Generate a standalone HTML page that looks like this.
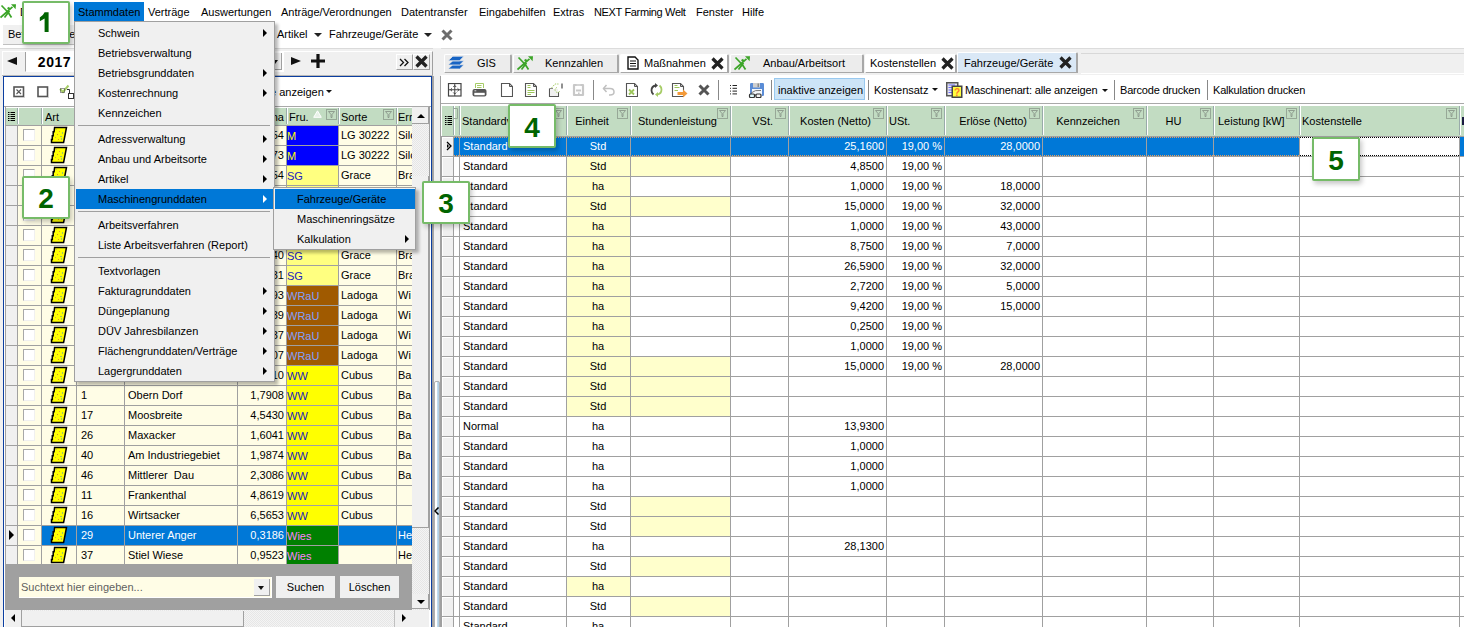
<!DOCTYPE html>
<html><head><meta charset="utf-8"><style>
html,body{margin:0;padding:0;width:1464px;height:627px;overflow:hidden;position:relative;font-family:"Liberation Sans", sans-serif;font-size:11px;color:#000}
</style></head><body>
<div style="position:absolute;left:0px;top:0px;width:1464px;height:627px;background:#f0f0f0"></div>
<div style="position:absolute;left:0px;top:0px;width:1464px;height:48px;background:#fff"></div>
<div style="position:absolute;left:0px;top:48px;width:1464px;height:1px;background:#dadada"></div>
<div style="position:absolute;left:148px;top:2px;line-height:20px;white-space:nowrap;">Verträge</div>
<div style="position:absolute;left:201px;top:2px;line-height:20px;white-space:nowrap;">Auswertungen</div>
<div style="position:absolute;left:281px;top:2px;line-height:20px;white-space:nowrap;">Anträge/Verordnungen</div>
<div style="position:absolute;left:401px;top:2px;line-height:20px;white-space:nowrap;">Datentransfer</div>
<div style="position:absolute;left:479px;top:2px;line-height:20px;white-space:nowrap;">Eingabehilfen</div>
<div style="position:absolute;left:553px;top:2px;line-height:20px;white-space:nowrap;">Extras</div>
<div style="position:absolute;left:594px;top:2px;line-height:20px;white-space:nowrap;letter-spacing:-0.35px">NEXT Farming Welt</div>
<div style="position:absolute;left:696px;top:2px;line-height:20px;white-space:nowrap;">Fenster</div>
<div style="position:absolute;left:742px;top:2px;line-height:20px;white-space:nowrap;">Hilfe</div>
<div style="position:absolute;left:74px;top:2px;width:70px;height:19px;background:#0078d7"></div>
<div style="position:absolute;left:78px;top:2px;line-height:20px;white-space:nowrap;">Stammdaten</div>
<svg style="position:absolute;left:0px;top:4px" width="17" height="15" viewBox="0 0 17 15" fill="none"><path d="M1.5 1.5 L6.8 7 M8.6 9 L11.5 13.5 M0.5 13.5 L12.5 2.8 M4.5 13.5 L9.5 7 M7.5 4.8 L9.5 3.5" stroke="#3ca528" stroke-width="1.7" fill="none"/><path d="M11 0.3 L16 0.3 L15.6 5.3 Z" fill="#3ca528"/></svg>
<div style="position:absolute;left:20px;top:2px;line-height:20px;white-space:nowrap;">D</div>
<div style="position:absolute;left:3px;top:25px;width:72px;height:19px;background:#f0f0f0;border-bottom:1px solid #c0c0c0"></div>
<div style="position:absolute;left:8px;top:24px;line-height:20px;white-space:nowrap;">Betriebsstätte</div>
<div style="position:absolute;left:277px;top:24px;line-height:20px;white-space:nowrap;">Artikel</div>
<div style="position:absolute;left:329px;top:24px;line-height:20px;white-space:nowrap;">Fahrzeuge/Geräte</div>
<div style="position:absolute;left:314px;top:33px;width:0;height:0;border-left:4.0px solid transparent;border-right:4.0px solid transparent;border-top:4px solid #222"></div>
<div style="position:absolute;left:424px;top:33px;width:0;height:0;border-left:4.0px solid transparent;border-right:4.0px solid transparent;border-top:4px solid #222"></div>
<svg style="position:absolute;left:441px;top:29px" width="12" height="12" viewBox="0 0 12 12" fill="none"><path d="M1.5 1.5 L10.5 10.5 M10.5 1.5 L1.5 10.5" stroke="#6d6d6d" stroke-width="3"/></svg>
<div style="position:absolute;left:7px;top:57px;width:0;height:0;border-top:4.5px solid transparent;border-bottom:4.5px solid transparent;border-right:10px solid #111"></div>
<div style="position:absolute;left:25px;top:51px;width:259px;height:21px;background:#fff;border-top:1px solid #a0a0a0;border-left:1px solid #a0a0a0;border-right:1px solid #fff;border-bottom:1px solid #fff;box-sizing:border-box"></div>
<div style="position:absolute;left:274px;top:53px;width:8px;height:17px;background:#f0f0f0;border-right:1px solid #a0a0a0;border-bottom:1px solid #a0a0a0;box-sizing:border-box"></div>
<div style="position:absolute;left:272px;top:60px;width:0;height:0;border-left:3.5px solid transparent;border-right:3.5px solid transparent;border-top:4px solid #111"></div>
<div style="position:absolute;right:1393px;top:51px;line-height:22px;white-space:nowrap;font-weight:bold;font-size:14px;letter-spacing:0.5px">2017</div>
<div style="position:absolute;left:291px;top:57px;width:0;height:0;border-top:4.5px solid transparent;border-bottom:4.5px solid transparent;border-left:10px solid #111"></div>
<svg style="position:absolute;left:311px;top:54px" width="14" height="14" viewBox="0 0 14 14" fill="none"><path d="M7 0 V14 M0 7 H14" stroke="#111" stroke-width="3.2"/></svg>
<div style="position:absolute;left:2px;top:51px;width:431px;height:25px;border-top:1px solid #fff;border-left:1px solid #fff;border-right:1px solid #a0a0a0;box-sizing:border-box"></div>
<div style="position:absolute;left:396px;top:54px;width:17px;height:16px;background:#f0f0f0;border-top:1px solid #fff;border-left:1px solid #fff;border-right:1px solid #a0a0a0;border-bottom:1px solid #a0a0a0;box-sizing:border-box"></div>
<svg style="position:absolute;left:399px;top:58px" width="11" height="9" viewBox="0 0 11 9" fill="none"><path d="M1 1 L4.5 4.5 L1 8 M5.5 1 L9 4.5 L5.5 8" stroke="#111" stroke-width="1.3" fill="none"/></svg>
<div style="position:absolute;left:413px;top:54px;width:17px;height:16px;background:#f0f0f0;border-top:1px solid #fff;border-left:1px solid #fff;border-right:1px solid #a0a0a0;border-bottom:1px solid #a0a0a0;box-sizing:border-box"></div>
<svg style="position:absolute;left:415px;top:55px" width="13" height="13" viewBox="0 0 13 13" fill="none"><path d="M1.5 1.5 L11.5 11.5 M11.5 1.5 L1.5 11.5" stroke="#222" stroke-width="3.3"/></svg>
<div style="position:absolute;left:2px;top:75px;width:431px;height:1px;background:#b8b8b8"></div>
<div style="position:absolute;left:3px;top:76px;width:429px;height:551px;background:#fff;border-left:1px solid #0b3ea0;border-top:1px solid #0b3ea0;border-right:1px solid #0b3ea0;box-sizing:border-box"></div>
<div style="position:absolute;left:432px;top:76px;width:1px;height:551px;background:#a0a0a0"></div>
<svg style="position:absolute;left:13px;top:86px" width="12" height="12" viewBox="0 0 12 12" fill="none"><rect x="1" y="1" width="9.5" height="9.5" fill="#fff" stroke="#555" stroke-width="1.6"/><path d="M3.5 3.5 L8 8 M8 3.5 L3.5 8" stroke="#555" stroke-width="1.1"/><path d="M11.5 2 V11.5 H2" fill="none" stroke="#ccc" stroke-width="1"/></svg>
<svg style="position:absolute;left:37px;top:86px" width="12" height="12" viewBox="0 0 12 12" fill="none"><rect x="1" y="1" width="9.5" height="9.5" fill="#fff" stroke="#555" stroke-width="1.6"/><path d="M11.5 2 V11.5 H2" fill="none" stroke="#ccc" stroke-width="1"/></svg>
<svg style="position:absolute;left:59px;top:84px" width="16" height="15" viewBox="0 0 16 15" fill="none"><path d="M1 5 L4 8 L9.5 1.5" stroke="#a6cc66" stroke-width="2" fill="none"/><rect x="1.5" y="4.5" width="4" height="4" fill="none" stroke="#333" stroke-dasharray="1 1"/><path d="M8 5.5 H10.5 V9" stroke="#333" fill="none"/><rect x="9.5" y="9.5" width="5" height="5" fill="#fff" stroke="#333"/></svg>
<div style="position:absolute;left:270px;top:82px;line-height:20px;white-space:nowrap;">e anzeigen</div>
<div style="position:absolute;left:326px;top:90px;width:0;height:0;border-left:3.0px solid transparent;border-right:3.0px solid transparent;border-top:3px solid #111"></div>
<div style="position:absolute;left:4px;top:106px;width:427px;height:1px;background:#a9a9a9"></div>
<div style="position:absolute;left:5px;top:107px;width:425px;height:503px;background:#fff"></div>
<div style="position:absolute;left:5px;top:106px;width:1px;height:504px;background:#a0a0a0"></div>
<div style="position:absolute;left:429px;top:106px;width:1px;height:504px;background:#a0a0a0"></div>
<div style="position:absolute;left:6px;top:107px;width:406px;height:18px;background:#fff"></div>
<div style="position:absolute;left:6px;top:108px;width:406px;height:17px;background:#c2dcc2"></div>
<div style="position:absolute;left:17px;top:108px;width:1px;height:16px;background:#9aa"></div>
<div style="position:absolute;left:18px;top:108px;width:1px;height:16px;background:#fff"></div>
<div style="position:absolute;left:41px;top:108px;width:1px;height:16px;background:#9aa"></div>
<div style="position:absolute;left:42px;top:108px;width:1px;height:16px;background:#fff"></div>
<div style="position:absolute;left:76px;top:108px;width:1px;height:16px;background:#9aa"></div>
<div style="position:absolute;left:77px;top:108px;width:1px;height:16px;background:#fff"></div>
<div style="position:absolute;left:124px;top:108px;width:1px;height:16px;background:#9aa"></div>
<div style="position:absolute;left:125px;top:108px;width:1px;height:16px;background:#fff"></div>
<div style="position:absolute;left:237px;top:108px;width:1px;height:16px;background:#9aa"></div>
<div style="position:absolute;left:238px;top:108px;width:1px;height:16px;background:#fff"></div>
<div style="position:absolute;left:286px;top:108px;width:1px;height:16px;background:#9aa"></div>
<div style="position:absolute;left:287px;top:108px;width:1px;height:16px;background:#fff"></div>
<div style="position:absolute;left:338px;top:108px;width:1px;height:16px;background:#9aa"></div>
<div style="position:absolute;left:339px;top:108px;width:1px;height:16px;background:#fff"></div>
<div style="position:absolute;left:396px;top:108px;width:1px;height:16px;background:#9aa"></div>
<div style="position:absolute;left:397px;top:108px;width:1px;height:16px;background:#fff"></div>
<div style="position:absolute;left:5px;top:125px;width:407px;height:1px;background:#a0a0a0"></div>
<svg style="position:absolute;left:8px;top:112px" width="8" height="10" viewBox="0 0 8 10" fill="none"><path d="M0 0.5 H1.5 M2.5 0.5 H7 M0 2.5 H1.5 M2.5 2.5 H7 M0 4.5 H1.5 M2.5 4.5 H7 M0 6.5 H1.5 M2.5 6.5 H7 M0 8.5 H1.5 M2.5 8.5 H7" stroke="#000" stroke-width="1"/></svg>
<div style="position:absolute;left:45px;top:107px;line-height:20px;white-space:nowrap;">Art</div>
<div style="position:absolute;right:1180px;top:107px;line-height:20px;white-space:nowrap;">ha</div>
<div style="position:absolute;left:289px;top:107px;line-height:20px;white-space:nowrap;">Fru.</div>
<svg style="position:absolute;left:313px;top:110px" width="9" height="8" viewBox="0 0 9 8" fill="none"><path d="M4.5 0.8 L8.3 7.3 H0.7 Z" fill="#e8f2e8" stroke="#fff" stroke-width="1"/></svg>
<svg style="position:absolute;left:326px;top:109px" width="11" height="11" viewBox="0 0 11 11" fill="none"><rect x="0.5" y="0.5" width="10" height="10" fill="none" stroke="#97a897"/><path d="M2.5 2.5 H8.5 L6 5.5 V8.5 H5 V5.5 Z" fill="none" stroke="#8a968a" stroke-width="0.9"/></svg>
<div style="position:absolute;left:341px;top:107px;line-height:20px;white-space:nowrap;">Sorte</div>
<svg style="position:absolute;left:383px;top:109px" width="11" height="11" viewBox="0 0 11 11" fill="none"><rect x="0.5" y="0.5" width="10" height="10" fill="none" stroke="#97a897"/><path d="M2.5 2.5 H8.5 L6 5.5 V8.5 H5 V5.5 Z" fill="none" stroke="#8a968a" stroke-width="0.9"/></svg>
<div style="position:absolute;left:398px;top:107px;line-height:20px;white-space:nowrap;">Err</div>
<div style="position:absolute;left:6px;top:126px;width:406px;height:19px;background:#fffde6"></div>
<div style="position:absolute;left:6px;top:126px;width:11px;height:19px;background:#f0f0f0"></div>
<div style="position:absolute;left:287px;top:126px;width:51px;height:19px;background:#0000ff"></div>
<div style="position:absolute;left:5px;top:145px;width:407px;height:1px;background:#a0a0a0"></div>
<div style="position:absolute;left:17px;top:126px;width:1px;height:19px;background:#a0a0a0"></div>
<div style="position:absolute;left:41px;top:126px;width:1px;height:19px;background:#a0a0a0"></div>
<div style="position:absolute;left:76px;top:126px;width:1px;height:19px;background:#a0a0a0"></div>
<div style="position:absolute;left:124px;top:126px;width:1px;height:19px;background:#a0a0a0"></div>
<div style="position:absolute;left:237px;top:126px;width:1px;height:19px;background:#a0a0a0"></div>
<div style="position:absolute;left:286px;top:126px;width:1px;height:19px;background:#a0a0a0"></div>
<div style="position:absolute;left:338px;top:126px;width:1px;height:19px;background:#a0a0a0"></div>
<div style="position:absolute;left:396px;top:126px;width:1px;height:19px;background:#a0a0a0"></div>
<div style="position:absolute;left:23px;top:129px;width:12px;height:12px;background:#fff;border-left:1px solid #a8a8a8;border-top:1px solid #a8a8a8;border-right:1px solid #f0f0f0;border-bottom:1px solid #f0f0f0;box-sizing:border-box"></div>
<svg style="position:absolute;left:50px;top:126px" width="18" height="18" viewBox="0 0 18 18" fill="none"><path d="M4.6 1.5 H16.5 L13.6 16.5 H1.5 V13.5 H2.3 V9.8 H3.2 V5.8 H4.1 Z" fill="#ffff00" stroke="#000" stroke-width="1.5" stroke-linejoin="miter"/><rect x="6" y="3" width="1" height="1" fill="#c8c060"/><rect x="9" y="5" width="1" height="1" fill="#e0a040"/><rect x="12" y="6" width="1" height="2" fill="#98c070"/><rect x="7" y="8" width="1" height="1" fill="#d09030"/><rect x="10" y="10" width="2" height="1" fill="#98c070"/><rect x="5" y="11" width="1" height="1" fill="#c8b050"/><rect x="8" y="13" width="1" height="1" fill="#e09030"/><rect x="11" y="12" width="1" height="2" fill="#a0c080"/></svg>
<div style="position:absolute;right:1180px;top:125px;line-height:20px;white-space:nowrap;color:#000">54</div>
<div style="position:absolute;left:287px;top:126px;line-height:20px;white-space:nowrap;color:#ffff00">M</div>
<div style="position:absolute;left:341px;top:125px;line-height:20px;white-space:nowrap;color:#000">LG 30222</div>
<div style="position:absolute;left:398px;top:125px;line-height:20px;white-space:nowrap;color:#000">Silo</div>
<div style="position:absolute;left:6px;top:146px;width:406px;height:19px;background:#fffde6"></div>
<div style="position:absolute;left:6px;top:146px;width:11px;height:19px;background:#f0f0f0"></div>
<div style="position:absolute;left:287px;top:146px;width:51px;height:19px;background:#0000ff"></div>
<div style="position:absolute;left:5px;top:165px;width:407px;height:1px;background:#a0a0a0"></div>
<div style="position:absolute;left:17px;top:146px;width:1px;height:19px;background:#a0a0a0"></div>
<div style="position:absolute;left:41px;top:146px;width:1px;height:19px;background:#a0a0a0"></div>
<div style="position:absolute;left:76px;top:146px;width:1px;height:19px;background:#a0a0a0"></div>
<div style="position:absolute;left:124px;top:146px;width:1px;height:19px;background:#a0a0a0"></div>
<div style="position:absolute;left:237px;top:146px;width:1px;height:19px;background:#a0a0a0"></div>
<div style="position:absolute;left:286px;top:146px;width:1px;height:19px;background:#a0a0a0"></div>
<div style="position:absolute;left:338px;top:146px;width:1px;height:19px;background:#a0a0a0"></div>
<div style="position:absolute;left:396px;top:146px;width:1px;height:19px;background:#a0a0a0"></div>
<div style="position:absolute;left:23px;top:149px;width:12px;height:12px;background:#fff;border-left:1px solid #a8a8a8;border-top:1px solid #a8a8a8;border-right:1px solid #f0f0f0;border-bottom:1px solid #f0f0f0;box-sizing:border-box"></div>
<svg style="position:absolute;left:50px;top:146px" width="18" height="18" viewBox="0 0 18 18" fill="none"><path d="M4.6 1.5 H16.5 L13.6 16.5 H1.5 V13.5 H2.3 V9.8 H3.2 V5.8 H4.1 Z" fill="#ffff00" stroke="#000" stroke-width="1.5" stroke-linejoin="miter"/><rect x="6" y="3" width="1" height="1" fill="#c8c060"/><rect x="9" y="5" width="1" height="1" fill="#e0a040"/><rect x="12" y="6" width="1" height="2" fill="#98c070"/><rect x="7" y="8" width="1" height="1" fill="#d09030"/><rect x="10" y="10" width="2" height="1" fill="#98c070"/><rect x="5" y="11" width="1" height="1" fill="#c8b050"/><rect x="8" y="13" width="1" height="1" fill="#e09030"/><rect x="11" y="12" width="1" height="2" fill="#a0c080"/></svg>
<div style="position:absolute;right:1180px;top:145px;line-height:20px;white-space:nowrap;color:#000">73</div>
<div style="position:absolute;left:287px;top:146px;line-height:20px;white-space:nowrap;color:#ffff00">M</div>
<div style="position:absolute;left:341px;top:145px;line-height:20px;white-space:nowrap;color:#000">LG 30222</div>
<div style="position:absolute;left:398px;top:145px;line-height:20px;white-space:nowrap;color:#000">Silo</div>
<div style="position:absolute;left:6px;top:166px;width:406px;height:19px;background:#fffde6"></div>
<div style="position:absolute;left:6px;top:166px;width:11px;height:19px;background:#f0f0f0"></div>
<div style="position:absolute;left:287px;top:166px;width:51px;height:19px;background:#ffff80"></div>
<div style="position:absolute;left:5px;top:185px;width:407px;height:1px;background:#a0a0a0"></div>
<div style="position:absolute;left:17px;top:166px;width:1px;height:19px;background:#a0a0a0"></div>
<div style="position:absolute;left:41px;top:166px;width:1px;height:19px;background:#a0a0a0"></div>
<div style="position:absolute;left:76px;top:166px;width:1px;height:19px;background:#a0a0a0"></div>
<div style="position:absolute;left:124px;top:166px;width:1px;height:19px;background:#a0a0a0"></div>
<div style="position:absolute;left:237px;top:166px;width:1px;height:19px;background:#a0a0a0"></div>
<div style="position:absolute;left:286px;top:166px;width:1px;height:19px;background:#a0a0a0"></div>
<div style="position:absolute;left:338px;top:166px;width:1px;height:19px;background:#a0a0a0"></div>
<div style="position:absolute;left:396px;top:166px;width:1px;height:19px;background:#a0a0a0"></div>
<div style="position:absolute;left:23px;top:169px;width:12px;height:12px;background:#fff;border-left:1px solid #a8a8a8;border-top:1px solid #a8a8a8;border-right:1px solid #f0f0f0;border-bottom:1px solid #f0f0f0;box-sizing:border-box"></div>
<svg style="position:absolute;left:50px;top:166px" width="18" height="18" viewBox="0 0 18 18" fill="none"><path d="M4.6 1.5 H16.5 L13.6 16.5 H1.5 V13.5 H2.3 V9.8 H3.2 V5.8 H4.1 Z" fill="#ffff00" stroke="#000" stroke-width="1.5" stroke-linejoin="miter"/><rect x="6" y="3" width="1" height="1" fill="#c8c060"/><rect x="9" y="5" width="1" height="1" fill="#e0a040"/><rect x="12" y="6" width="1" height="2" fill="#98c070"/><rect x="7" y="8" width="1" height="1" fill="#d09030"/><rect x="10" y="10" width="2" height="1" fill="#98c070"/><rect x="5" y="11" width="1" height="1" fill="#c8b050"/><rect x="8" y="13" width="1" height="1" fill="#e09030"/><rect x="11" y="12" width="1" height="2" fill="#a0c080"/></svg>
<div style="position:absolute;right:1180px;top:165px;line-height:20px;white-space:nowrap;color:#000">54</div>
<div style="position:absolute;left:287px;top:166px;line-height:20px;white-space:nowrap;color:#2020c0">SG</div>
<div style="position:absolute;left:341px;top:165px;line-height:20px;white-space:nowrap;color:#000">Grace</div>
<div style="position:absolute;left:398px;top:165px;line-height:20px;white-space:nowrap;color:#000">Bra</div>
<div style="position:absolute;left:6px;top:186px;width:406px;height:19px;background:#fffde6"></div>
<div style="position:absolute;left:6px;top:186px;width:11px;height:19px;background:#f0f0f0"></div>
<div style="position:absolute;left:287px;top:186px;width:51px;height:19px;background:#ffff80"></div>
<div style="position:absolute;left:5px;top:205px;width:407px;height:1px;background:#a0a0a0"></div>
<div style="position:absolute;left:17px;top:186px;width:1px;height:19px;background:#a0a0a0"></div>
<div style="position:absolute;left:41px;top:186px;width:1px;height:19px;background:#a0a0a0"></div>
<div style="position:absolute;left:76px;top:186px;width:1px;height:19px;background:#a0a0a0"></div>
<div style="position:absolute;left:124px;top:186px;width:1px;height:19px;background:#a0a0a0"></div>
<div style="position:absolute;left:237px;top:186px;width:1px;height:19px;background:#a0a0a0"></div>
<div style="position:absolute;left:286px;top:186px;width:1px;height:19px;background:#a0a0a0"></div>
<div style="position:absolute;left:338px;top:186px;width:1px;height:19px;background:#a0a0a0"></div>
<div style="position:absolute;left:396px;top:186px;width:1px;height:19px;background:#a0a0a0"></div>
<div style="position:absolute;left:23px;top:189px;width:12px;height:12px;background:#fff;border-left:1px solid #a8a8a8;border-top:1px solid #a8a8a8;border-right:1px solid #f0f0f0;border-bottom:1px solid #f0f0f0;box-sizing:border-box"></div>
<svg style="position:absolute;left:50px;top:186px" width="18" height="18" viewBox="0 0 18 18" fill="none"><path d="M4.6 1.5 H16.5 L13.6 16.5 H1.5 V13.5 H2.3 V9.8 H3.2 V5.8 H4.1 Z" fill="#ffff00" stroke="#000" stroke-width="1.5" stroke-linejoin="miter"/><rect x="6" y="3" width="1" height="1" fill="#c8c060"/><rect x="9" y="5" width="1" height="1" fill="#e0a040"/><rect x="12" y="6" width="1" height="2" fill="#98c070"/><rect x="7" y="8" width="1" height="1" fill="#d09030"/><rect x="10" y="10" width="2" height="1" fill="#98c070"/><rect x="5" y="11" width="1" height="1" fill="#c8b050"/><rect x="8" y="13" width="1" height="1" fill="#e09030"/><rect x="11" y="12" width="1" height="2" fill="#a0c080"/></svg>
<div style="position:absolute;left:6px;top:206px;width:406px;height:19px;background:#fffde6"></div>
<div style="position:absolute;left:6px;top:206px;width:11px;height:19px;background:#f0f0f0"></div>
<div style="position:absolute;left:287px;top:206px;width:51px;height:19px;background:#ffff80"></div>
<div style="position:absolute;left:5px;top:225px;width:407px;height:1px;background:#a0a0a0"></div>
<div style="position:absolute;left:17px;top:206px;width:1px;height:19px;background:#a0a0a0"></div>
<div style="position:absolute;left:41px;top:206px;width:1px;height:19px;background:#a0a0a0"></div>
<div style="position:absolute;left:76px;top:206px;width:1px;height:19px;background:#a0a0a0"></div>
<div style="position:absolute;left:124px;top:206px;width:1px;height:19px;background:#a0a0a0"></div>
<div style="position:absolute;left:237px;top:206px;width:1px;height:19px;background:#a0a0a0"></div>
<div style="position:absolute;left:286px;top:206px;width:1px;height:19px;background:#a0a0a0"></div>
<div style="position:absolute;left:338px;top:206px;width:1px;height:19px;background:#a0a0a0"></div>
<div style="position:absolute;left:396px;top:206px;width:1px;height:19px;background:#a0a0a0"></div>
<div style="position:absolute;left:23px;top:209px;width:12px;height:12px;background:#fff;border-left:1px solid #a8a8a8;border-top:1px solid #a8a8a8;border-right:1px solid #f0f0f0;border-bottom:1px solid #f0f0f0;box-sizing:border-box"></div>
<svg style="position:absolute;left:50px;top:206px" width="18" height="18" viewBox="0 0 18 18" fill="none"><path d="M4.6 1.5 H16.5 L13.6 16.5 H1.5 V13.5 H2.3 V9.8 H3.2 V5.8 H4.1 Z" fill="#ffff00" stroke="#000" stroke-width="1.5" stroke-linejoin="miter"/><rect x="6" y="3" width="1" height="1" fill="#c8c060"/><rect x="9" y="5" width="1" height="1" fill="#e0a040"/><rect x="12" y="6" width="1" height="2" fill="#98c070"/><rect x="7" y="8" width="1" height="1" fill="#d09030"/><rect x="10" y="10" width="2" height="1" fill="#98c070"/><rect x="5" y="11" width="1" height="1" fill="#c8b050"/><rect x="8" y="13" width="1" height="1" fill="#e09030"/><rect x="11" y="12" width="1" height="2" fill="#a0c080"/></svg>
<div style="position:absolute;left:6px;top:226px;width:406px;height:19px;background:#fffde6"></div>
<div style="position:absolute;left:6px;top:226px;width:11px;height:19px;background:#f0f0f0"></div>
<div style="position:absolute;left:287px;top:226px;width:51px;height:19px;background:#ffff80"></div>
<div style="position:absolute;left:5px;top:245px;width:407px;height:1px;background:#a0a0a0"></div>
<div style="position:absolute;left:17px;top:226px;width:1px;height:19px;background:#a0a0a0"></div>
<div style="position:absolute;left:41px;top:226px;width:1px;height:19px;background:#a0a0a0"></div>
<div style="position:absolute;left:76px;top:226px;width:1px;height:19px;background:#a0a0a0"></div>
<div style="position:absolute;left:124px;top:226px;width:1px;height:19px;background:#a0a0a0"></div>
<div style="position:absolute;left:237px;top:226px;width:1px;height:19px;background:#a0a0a0"></div>
<div style="position:absolute;left:286px;top:226px;width:1px;height:19px;background:#a0a0a0"></div>
<div style="position:absolute;left:338px;top:226px;width:1px;height:19px;background:#a0a0a0"></div>
<div style="position:absolute;left:396px;top:226px;width:1px;height:19px;background:#a0a0a0"></div>
<div style="position:absolute;left:23px;top:229px;width:12px;height:12px;background:#fff;border-left:1px solid #a8a8a8;border-top:1px solid #a8a8a8;border-right:1px solid #f0f0f0;border-bottom:1px solid #f0f0f0;box-sizing:border-box"></div>
<svg style="position:absolute;left:50px;top:226px" width="18" height="18" viewBox="0 0 18 18" fill="none"><path d="M4.6 1.5 H16.5 L13.6 16.5 H1.5 V13.5 H2.3 V9.8 H3.2 V5.8 H4.1 Z" fill="#ffff00" stroke="#000" stroke-width="1.5" stroke-linejoin="miter"/><rect x="6" y="3" width="1" height="1" fill="#c8c060"/><rect x="9" y="5" width="1" height="1" fill="#e0a040"/><rect x="12" y="6" width="1" height="2" fill="#98c070"/><rect x="7" y="8" width="1" height="1" fill="#d09030"/><rect x="10" y="10" width="2" height="1" fill="#98c070"/><rect x="5" y="11" width="1" height="1" fill="#c8b050"/><rect x="8" y="13" width="1" height="1" fill="#e09030"/><rect x="11" y="12" width="1" height="2" fill="#a0c080"/></svg>
<div style="position:absolute;left:6px;top:246px;width:406px;height:19px;background:#fffde6"></div>
<div style="position:absolute;left:6px;top:246px;width:11px;height:19px;background:#f0f0f0"></div>
<div style="position:absolute;left:287px;top:246px;width:51px;height:19px;background:#ffff80"></div>
<div style="position:absolute;left:5px;top:265px;width:407px;height:1px;background:#a0a0a0"></div>
<div style="position:absolute;left:17px;top:246px;width:1px;height:19px;background:#a0a0a0"></div>
<div style="position:absolute;left:41px;top:246px;width:1px;height:19px;background:#a0a0a0"></div>
<div style="position:absolute;left:76px;top:246px;width:1px;height:19px;background:#a0a0a0"></div>
<div style="position:absolute;left:124px;top:246px;width:1px;height:19px;background:#a0a0a0"></div>
<div style="position:absolute;left:237px;top:246px;width:1px;height:19px;background:#a0a0a0"></div>
<div style="position:absolute;left:286px;top:246px;width:1px;height:19px;background:#a0a0a0"></div>
<div style="position:absolute;left:338px;top:246px;width:1px;height:19px;background:#a0a0a0"></div>
<div style="position:absolute;left:396px;top:246px;width:1px;height:19px;background:#a0a0a0"></div>
<div style="position:absolute;left:23px;top:249px;width:12px;height:12px;background:#fff;border-left:1px solid #a8a8a8;border-top:1px solid #a8a8a8;border-right:1px solid #f0f0f0;border-bottom:1px solid #f0f0f0;box-sizing:border-box"></div>
<svg style="position:absolute;left:50px;top:246px" width="18" height="18" viewBox="0 0 18 18" fill="none"><path d="M4.6 1.5 H16.5 L13.6 16.5 H1.5 V13.5 H2.3 V9.8 H3.2 V5.8 H4.1 Z" fill="#ffff00" stroke="#000" stroke-width="1.5" stroke-linejoin="miter"/><rect x="6" y="3" width="1" height="1" fill="#c8c060"/><rect x="9" y="5" width="1" height="1" fill="#e0a040"/><rect x="12" y="6" width="1" height="2" fill="#98c070"/><rect x="7" y="8" width="1" height="1" fill="#d09030"/><rect x="10" y="10" width="2" height="1" fill="#98c070"/><rect x="5" y="11" width="1" height="1" fill="#c8b050"/><rect x="8" y="13" width="1" height="1" fill="#e09030"/><rect x="11" y="12" width="1" height="2" fill="#a0c080"/></svg>
<div style="position:absolute;right:1180px;top:245px;line-height:20px;white-space:nowrap;color:#000">40</div>
<div style="position:absolute;left:287px;top:246px;line-height:20px;white-space:nowrap;color:#2020c0">SG</div>
<div style="position:absolute;left:341px;top:245px;line-height:20px;white-space:nowrap;color:#000">Grace</div>
<div style="position:absolute;left:398px;top:245px;line-height:20px;white-space:nowrap;color:#000">Bra</div>
<div style="position:absolute;left:6px;top:266px;width:406px;height:19px;background:#fffde6"></div>
<div style="position:absolute;left:6px;top:266px;width:11px;height:19px;background:#f0f0f0"></div>
<div style="position:absolute;left:287px;top:266px;width:51px;height:19px;background:#ffff80"></div>
<div style="position:absolute;left:5px;top:285px;width:407px;height:1px;background:#a0a0a0"></div>
<div style="position:absolute;left:17px;top:266px;width:1px;height:19px;background:#a0a0a0"></div>
<div style="position:absolute;left:41px;top:266px;width:1px;height:19px;background:#a0a0a0"></div>
<div style="position:absolute;left:76px;top:266px;width:1px;height:19px;background:#a0a0a0"></div>
<div style="position:absolute;left:124px;top:266px;width:1px;height:19px;background:#a0a0a0"></div>
<div style="position:absolute;left:237px;top:266px;width:1px;height:19px;background:#a0a0a0"></div>
<div style="position:absolute;left:286px;top:266px;width:1px;height:19px;background:#a0a0a0"></div>
<div style="position:absolute;left:338px;top:266px;width:1px;height:19px;background:#a0a0a0"></div>
<div style="position:absolute;left:396px;top:266px;width:1px;height:19px;background:#a0a0a0"></div>
<div style="position:absolute;left:23px;top:269px;width:12px;height:12px;background:#fff;border-left:1px solid #a8a8a8;border-top:1px solid #a8a8a8;border-right:1px solid #f0f0f0;border-bottom:1px solid #f0f0f0;box-sizing:border-box"></div>
<svg style="position:absolute;left:50px;top:266px" width="18" height="18" viewBox="0 0 18 18" fill="none"><path d="M4.6 1.5 H16.5 L13.6 16.5 H1.5 V13.5 H2.3 V9.8 H3.2 V5.8 H4.1 Z" fill="#ffff00" stroke="#000" stroke-width="1.5" stroke-linejoin="miter"/><rect x="6" y="3" width="1" height="1" fill="#c8c060"/><rect x="9" y="5" width="1" height="1" fill="#e0a040"/><rect x="12" y="6" width="1" height="2" fill="#98c070"/><rect x="7" y="8" width="1" height="1" fill="#d09030"/><rect x="10" y="10" width="2" height="1" fill="#98c070"/><rect x="5" y="11" width="1" height="1" fill="#c8b050"/><rect x="8" y="13" width="1" height="1" fill="#e09030"/><rect x="11" y="12" width="1" height="2" fill="#a0c080"/></svg>
<div style="position:absolute;right:1180px;top:265px;line-height:20px;white-space:nowrap;color:#000">31</div>
<div style="position:absolute;left:287px;top:266px;line-height:20px;white-space:nowrap;color:#2020c0">SG</div>
<div style="position:absolute;left:341px;top:265px;line-height:20px;white-space:nowrap;color:#000">Grace</div>
<div style="position:absolute;left:398px;top:265px;line-height:20px;white-space:nowrap;color:#000">Bra</div>
<div style="position:absolute;left:6px;top:286px;width:406px;height:19px;background:#fffde6"></div>
<div style="position:absolute;left:6px;top:286px;width:11px;height:19px;background:#f0f0f0"></div>
<div style="position:absolute;left:287px;top:286px;width:51px;height:19px;background:#a05a00"></div>
<div style="position:absolute;left:5px;top:305px;width:407px;height:1px;background:#a0a0a0"></div>
<div style="position:absolute;left:17px;top:286px;width:1px;height:19px;background:#a0a0a0"></div>
<div style="position:absolute;left:41px;top:286px;width:1px;height:19px;background:#a0a0a0"></div>
<div style="position:absolute;left:76px;top:286px;width:1px;height:19px;background:#a0a0a0"></div>
<div style="position:absolute;left:124px;top:286px;width:1px;height:19px;background:#a0a0a0"></div>
<div style="position:absolute;left:237px;top:286px;width:1px;height:19px;background:#a0a0a0"></div>
<div style="position:absolute;left:286px;top:286px;width:1px;height:19px;background:#a0a0a0"></div>
<div style="position:absolute;left:338px;top:286px;width:1px;height:19px;background:#a0a0a0"></div>
<div style="position:absolute;left:396px;top:286px;width:1px;height:19px;background:#a0a0a0"></div>
<div style="position:absolute;left:23px;top:289px;width:12px;height:12px;background:#fff;border-left:1px solid #a8a8a8;border-top:1px solid #a8a8a8;border-right:1px solid #f0f0f0;border-bottom:1px solid #f0f0f0;box-sizing:border-box"></div>
<svg style="position:absolute;left:50px;top:286px" width="18" height="18" viewBox="0 0 18 18" fill="none"><path d="M4.6 1.5 H16.5 L13.6 16.5 H1.5 V13.5 H2.3 V9.8 H3.2 V5.8 H4.1 Z" fill="#ffff00" stroke="#000" stroke-width="1.5" stroke-linejoin="miter"/><rect x="6" y="3" width="1" height="1" fill="#c8c060"/><rect x="9" y="5" width="1" height="1" fill="#e0a040"/><rect x="12" y="6" width="1" height="2" fill="#98c070"/><rect x="7" y="8" width="1" height="1" fill="#d09030"/><rect x="10" y="10" width="2" height="1" fill="#98c070"/><rect x="5" y="11" width="1" height="1" fill="#c8b050"/><rect x="8" y="13" width="1" height="1" fill="#e09030"/><rect x="11" y="12" width="1" height="2" fill="#a0c080"/></svg>
<div style="position:absolute;right:1180px;top:285px;line-height:20px;white-space:nowrap;color:#000">93</div>
<div style="position:absolute;left:287px;top:286px;line-height:20px;white-space:nowrap;color:#80a0ff">WRaU</div>
<div style="position:absolute;left:341px;top:285px;line-height:20px;white-space:nowrap;color:#000">Ladoga</div>
<div style="position:absolute;left:398px;top:285px;line-height:20px;white-space:nowrap;color:#000">Wi</div>
<div style="position:absolute;left:6px;top:306px;width:406px;height:19px;background:#fffde6"></div>
<div style="position:absolute;left:6px;top:306px;width:11px;height:19px;background:#f0f0f0"></div>
<div style="position:absolute;left:287px;top:306px;width:51px;height:19px;background:#a05a00"></div>
<div style="position:absolute;left:5px;top:325px;width:407px;height:1px;background:#a0a0a0"></div>
<div style="position:absolute;left:17px;top:306px;width:1px;height:19px;background:#a0a0a0"></div>
<div style="position:absolute;left:41px;top:306px;width:1px;height:19px;background:#a0a0a0"></div>
<div style="position:absolute;left:76px;top:306px;width:1px;height:19px;background:#a0a0a0"></div>
<div style="position:absolute;left:124px;top:306px;width:1px;height:19px;background:#a0a0a0"></div>
<div style="position:absolute;left:237px;top:306px;width:1px;height:19px;background:#a0a0a0"></div>
<div style="position:absolute;left:286px;top:306px;width:1px;height:19px;background:#a0a0a0"></div>
<div style="position:absolute;left:338px;top:306px;width:1px;height:19px;background:#a0a0a0"></div>
<div style="position:absolute;left:396px;top:306px;width:1px;height:19px;background:#a0a0a0"></div>
<div style="position:absolute;left:23px;top:309px;width:12px;height:12px;background:#fff;border-left:1px solid #a8a8a8;border-top:1px solid #a8a8a8;border-right:1px solid #f0f0f0;border-bottom:1px solid #f0f0f0;box-sizing:border-box"></div>
<svg style="position:absolute;left:50px;top:306px" width="18" height="18" viewBox="0 0 18 18" fill="none"><path d="M4.6 1.5 H16.5 L13.6 16.5 H1.5 V13.5 H2.3 V9.8 H3.2 V5.8 H4.1 Z" fill="#ffff00" stroke="#000" stroke-width="1.5" stroke-linejoin="miter"/><rect x="6" y="3" width="1" height="1" fill="#c8c060"/><rect x="9" y="5" width="1" height="1" fill="#e0a040"/><rect x="12" y="6" width="1" height="2" fill="#98c070"/><rect x="7" y="8" width="1" height="1" fill="#d09030"/><rect x="10" y="10" width="2" height="1" fill="#98c070"/><rect x="5" y="11" width="1" height="1" fill="#c8b050"/><rect x="8" y="13" width="1" height="1" fill="#e09030"/><rect x="11" y="12" width="1" height="2" fill="#a0c080"/></svg>
<div style="position:absolute;right:1180px;top:305px;line-height:20px;white-space:nowrap;color:#000">39</div>
<div style="position:absolute;left:287px;top:306px;line-height:20px;white-space:nowrap;color:#80a0ff">WRaU</div>
<div style="position:absolute;left:341px;top:305px;line-height:20px;white-space:nowrap;color:#000">Ladoga</div>
<div style="position:absolute;left:398px;top:305px;line-height:20px;white-space:nowrap;color:#000">Wi</div>
<div style="position:absolute;left:6px;top:326px;width:406px;height:19px;background:#fffde6"></div>
<div style="position:absolute;left:6px;top:326px;width:11px;height:19px;background:#f0f0f0"></div>
<div style="position:absolute;left:287px;top:326px;width:51px;height:19px;background:#a05a00"></div>
<div style="position:absolute;left:5px;top:345px;width:407px;height:1px;background:#a0a0a0"></div>
<div style="position:absolute;left:17px;top:326px;width:1px;height:19px;background:#a0a0a0"></div>
<div style="position:absolute;left:41px;top:326px;width:1px;height:19px;background:#a0a0a0"></div>
<div style="position:absolute;left:76px;top:326px;width:1px;height:19px;background:#a0a0a0"></div>
<div style="position:absolute;left:124px;top:326px;width:1px;height:19px;background:#a0a0a0"></div>
<div style="position:absolute;left:237px;top:326px;width:1px;height:19px;background:#a0a0a0"></div>
<div style="position:absolute;left:286px;top:326px;width:1px;height:19px;background:#a0a0a0"></div>
<div style="position:absolute;left:338px;top:326px;width:1px;height:19px;background:#a0a0a0"></div>
<div style="position:absolute;left:396px;top:326px;width:1px;height:19px;background:#a0a0a0"></div>
<div style="position:absolute;left:23px;top:329px;width:12px;height:12px;background:#fff;border-left:1px solid #a8a8a8;border-top:1px solid #a8a8a8;border-right:1px solid #f0f0f0;border-bottom:1px solid #f0f0f0;box-sizing:border-box"></div>
<svg style="position:absolute;left:50px;top:326px" width="18" height="18" viewBox="0 0 18 18" fill="none"><path d="M4.6 1.5 H16.5 L13.6 16.5 H1.5 V13.5 H2.3 V9.8 H3.2 V5.8 H4.1 Z" fill="#ffff00" stroke="#000" stroke-width="1.5" stroke-linejoin="miter"/><rect x="6" y="3" width="1" height="1" fill="#c8c060"/><rect x="9" y="5" width="1" height="1" fill="#e0a040"/><rect x="12" y="6" width="1" height="2" fill="#98c070"/><rect x="7" y="8" width="1" height="1" fill="#d09030"/><rect x="10" y="10" width="2" height="1" fill="#98c070"/><rect x="5" y="11" width="1" height="1" fill="#c8b050"/><rect x="8" y="13" width="1" height="1" fill="#e09030"/><rect x="11" y="12" width="1" height="2" fill="#a0c080"/></svg>
<div style="position:absolute;right:1180px;top:325px;line-height:20px;white-space:nowrap;color:#000">37</div>
<div style="position:absolute;left:287px;top:326px;line-height:20px;white-space:nowrap;color:#80a0ff">WRaU</div>
<div style="position:absolute;left:341px;top:325px;line-height:20px;white-space:nowrap;color:#000">Ladoga</div>
<div style="position:absolute;left:398px;top:325px;line-height:20px;white-space:nowrap;color:#000">Wi</div>
<div style="position:absolute;left:6px;top:346px;width:406px;height:19px;background:#fffde6"></div>
<div style="position:absolute;left:6px;top:346px;width:11px;height:19px;background:#f0f0f0"></div>
<div style="position:absolute;left:287px;top:346px;width:51px;height:19px;background:#a05a00"></div>
<div style="position:absolute;left:5px;top:365px;width:407px;height:1px;background:#a0a0a0"></div>
<div style="position:absolute;left:17px;top:346px;width:1px;height:19px;background:#a0a0a0"></div>
<div style="position:absolute;left:41px;top:346px;width:1px;height:19px;background:#a0a0a0"></div>
<div style="position:absolute;left:76px;top:346px;width:1px;height:19px;background:#a0a0a0"></div>
<div style="position:absolute;left:124px;top:346px;width:1px;height:19px;background:#a0a0a0"></div>
<div style="position:absolute;left:237px;top:346px;width:1px;height:19px;background:#a0a0a0"></div>
<div style="position:absolute;left:286px;top:346px;width:1px;height:19px;background:#a0a0a0"></div>
<div style="position:absolute;left:338px;top:346px;width:1px;height:19px;background:#a0a0a0"></div>
<div style="position:absolute;left:396px;top:346px;width:1px;height:19px;background:#a0a0a0"></div>
<div style="position:absolute;left:23px;top:349px;width:12px;height:12px;background:#fff;border-left:1px solid #a8a8a8;border-top:1px solid #a8a8a8;border-right:1px solid #f0f0f0;border-bottom:1px solid #f0f0f0;box-sizing:border-box"></div>
<svg style="position:absolute;left:50px;top:346px" width="18" height="18" viewBox="0 0 18 18" fill="none"><path d="M4.6 1.5 H16.5 L13.6 16.5 H1.5 V13.5 H2.3 V9.8 H3.2 V5.8 H4.1 Z" fill="#ffff00" stroke="#000" stroke-width="1.5" stroke-linejoin="miter"/><rect x="6" y="3" width="1" height="1" fill="#c8c060"/><rect x="9" y="5" width="1" height="1" fill="#e0a040"/><rect x="12" y="6" width="1" height="2" fill="#98c070"/><rect x="7" y="8" width="1" height="1" fill="#d09030"/><rect x="10" y="10" width="2" height="1" fill="#98c070"/><rect x="5" y="11" width="1" height="1" fill="#c8b050"/><rect x="8" y="13" width="1" height="1" fill="#e09030"/><rect x="11" y="12" width="1" height="2" fill="#a0c080"/></svg>
<div style="position:absolute;right:1180px;top:345px;line-height:20px;white-space:nowrap;color:#000">07</div>
<div style="position:absolute;left:287px;top:346px;line-height:20px;white-space:nowrap;color:#80a0ff">WRaU</div>
<div style="position:absolute;left:341px;top:345px;line-height:20px;white-space:nowrap;color:#000">Ladoga</div>
<div style="position:absolute;left:398px;top:345px;line-height:20px;white-space:nowrap;color:#000">Wi</div>
<div style="position:absolute;left:6px;top:366px;width:406px;height:19px;background:#fffde6"></div>
<div style="position:absolute;left:6px;top:366px;width:11px;height:19px;background:#f0f0f0"></div>
<div style="position:absolute;left:287px;top:366px;width:51px;height:19px;background:#ffff00"></div>
<div style="position:absolute;left:5px;top:385px;width:407px;height:1px;background:#a0a0a0"></div>
<div style="position:absolute;left:17px;top:366px;width:1px;height:19px;background:#a0a0a0"></div>
<div style="position:absolute;left:41px;top:366px;width:1px;height:19px;background:#a0a0a0"></div>
<div style="position:absolute;left:76px;top:366px;width:1px;height:19px;background:#a0a0a0"></div>
<div style="position:absolute;left:124px;top:366px;width:1px;height:19px;background:#a0a0a0"></div>
<div style="position:absolute;left:237px;top:366px;width:1px;height:19px;background:#a0a0a0"></div>
<div style="position:absolute;left:286px;top:366px;width:1px;height:19px;background:#a0a0a0"></div>
<div style="position:absolute;left:338px;top:366px;width:1px;height:19px;background:#a0a0a0"></div>
<div style="position:absolute;left:396px;top:366px;width:1px;height:19px;background:#a0a0a0"></div>
<div style="position:absolute;left:23px;top:369px;width:12px;height:12px;background:#fff;border-left:1px solid #a8a8a8;border-top:1px solid #a8a8a8;border-right:1px solid #f0f0f0;border-bottom:1px solid #f0f0f0;box-sizing:border-box"></div>
<svg style="position:absolute;left:50px;top:366px" width="18" height="18" viewBox="0 0 18 18" fill="none"><path d="M4.6 1.5 H16.5 L13.6 16.5 H1.5 V13.5 H2.3 V9.8 H3.2 V5.8 H4.1 Z" fill="#ffff00" stroke="#000" stroke-width="1.5" stroke-linejoin="miter"/><rect x="6" y="3" width="1" height="1" fill="#c8c060"/><rect x="9" y="5" width="1" height="1" fill="#e0a040"/><rect x="12" y="6" width="1" height="2" fill="#98c070"/><rect x="7" y="8" width="1" height="1" fill="#d09030"/><rect x="10" y="10" width="2" height="1" fill="#98c070"/><rect x="5" y="11" width="1" height="1" fill="#c8b050"/><rect x="8" y="13" width="1" height="1" fill="#e09030"/><rect x="11" y="12" width="1" height="2" fill="#a0c080"/></svg>
<div style="position:absolute;right:1180px;top:365px;line-height:20px;white-space:nowrap;color:#000">10</div>
<div style="position:absolute;left:287px;top:366px;line-height:20px;white-space:nowrap;color:#2020c0">WW</div>
<div style="position:absolute;left:341px;top:365px;line-height:20px;white-space:nowrap;color:#000">Cubus</div>
<div style="position:absolute;left:398px;top:365px;line-height:20px;white-space:nowrap;color:#000">Ba</div>
<div style="position:absolute;left:6px;top:386px;width:406px;height:19px;background:#fffde6"></div>
<div style="position:absolute;left:6px;top:386px;width:11px;height:19px;background:#f0f0f0"></div>
<div style="position:absolute;left:287px;top:386px;width:51px;height:19px;background:#ffff00"></div>
<div style="position:absolute;left:5px;top:405px;width:407px;height:1px;background:#a0a0a0"></div>
<div style="position:absolute;left:17px;top:386px;width:1px;height:19px;background:#a0a0a0"></div>
<div style="position:absolute;left:41px;top:386px;width:1px;height:19px;background:#a0a0a0"></div>
<div style="position:absolute;left:76px;top:386px;width:1px;height:19px;background:#a0a0a0"></div>
<div style="position:absolute;left:124px;top:386px;width:1px;height:19px;background:#a0a0a0"></div>
<div style="position:absolute;left:237px;top:386px;width:1px;height:19px;background:#a0a0a0"></div>
<div style="position:absolute;left:286px;top:386px;width:1px;height:19px;background:#a0a0a0"></div>
<div style="position:absolute;left:338px;top:386px;width:1px;height:19px;background:#a0a0a0"></div>
<div style="position:absolute;left:396px;top:386px;width:1px;height:19px;background:#a0a0a0"></div>
<div style="position:absolute;left:23px;top:389px;width:12px;height:12px;background:#fff;border-left:1px solid #a8a8a8;border-top:1px solid #a8a8a8;border-right:1px solid #f0f0f0;border-bottom:1px solid #f0f0f0;box-sizing:border-box"></div>
<svg style="position:absolute;left:50px;top:386px" width="18" height="18" viewBox="0 0 18 18" fill="none"><path d="M4.6 1.5 H16.5 L13.6 16.5 H1.5 V13.5 H2.3 V9.8 H3.2 V5.8 H4.1 Z" fill="#ffff00" stroke="#000" stroke-width="1.5" stroke-linejoin="miter"/><rect x="6" y="3" width="1" height="1" fill="#c8c060"/><rect x="9" y="5" width="1" height="1" fill="#e0a040"/><rect x="12" y="6" width="1" height="2" fill="#98c070"/><rect x="7" y="8" width="1" height="1" fill="#d09030"/><rect x="10" y="10" width="2" height="1" fill="#98c070"/><rect x="5" y="11" width="1" height="1" fill="#c8b050"/><rect x="8" y="13" width="1" height="1" fill="#e09030"/><rect x="11" y="12" width="1" height="2" fill="#a0c080"/></svg>
<div style="position:absolute;left:81px;top:385px;line-height:20px;white-space:nowrap;color:#000">1</div>
<div style="position:absolute;left:128px;top:385px;line-height:20px;white-space:nowrap;color:#000">Obern Dorf</div>
<div style="position:absolute;right:1180px;top:385px;line-height:20px;white-space:nowrap;color:#000">1,7908</div>
<div style="position:absolute;left:287px;top:386px;line-height:20px;white-space:nowrap;color:#2020c0">WW</div>
<div style="position:absolute;left:341px;top:385px;line-height:20px;white-space:nowrap;color:#000">Cubus</div>
<div style="position:absolute;left:398px;top:385px;line-height:20px;white-space:nowrap;color:#000">Ba</div>
<div style="position:absolute;left:6px;top:406px;width:406px;height:19px;background:#fffde6"></div>
<div style="position:absolute;left:6px;top:406px;width:11px;height:19px;background:#f0f0f0"></div>
<div style="position:absolute;left:287px;top:406px;width:51px;height:19px;background:#ffff00"></div>
<div style="position:absolute;left:5px;top:425px;width:407px;height:1px;background:#a0a0a0"></div>
<div style="position:absolute;left:17px;top:406px;width:1px;height:19px;background:#a0a0a0"></div>
<div style="position:absolute;left:41px;top:406px;width:1px;height:19px;background:#a0a0a0"></div>
<div style="position:absolute;left:76px;top:406px;width:1px;height:19px;background:#a0a0a0"></div>
<div style="position:absolute;left:124px;top:406px;width:1px;height:19px;background:#a0a0a0"></div>
<div style="position:absolute;left:237px;top:406px;width:1px;height:19px;background:#a0a0a0"></div>
<div style="position:absolute;left:286px;top:406px;width:1px;height:19px;background:#a0a0a0"></div>
<div style="position:absolute;left:338px;top:406px;width:1px;height:19px;background:#a0a0a0"></div>
<div style="position:absolute;left:396px;top:406px;width:1px;height:19px;background:#a0a0a0"></div>
<div style="position:absolute;left:23px;top:409px;width:12px;height:12px;background:#fff;border-left:1px solid #a8a8a8;border-top:1px solid #a8a8a8;border-right:1px solid #f0f0f0;border-bottom:1px solid #f0f0f0;box-sizing:border-box"></div>
<svg style="position:absolute;left:50px;top:406px" width="18" height="18" viewBox="0 0 18 18" fill="none"><path d="M4.6 1.5 H16.5 L13.6 16.5 H1.5 V13.5 H2.3 V9.8 H3.2 V5.8 H4.1 Z" fill="#ffff00" stroke="#000" stroke-width="1.5" stroke-linejoin="miter"/><rect x="6" y="3" width="1" height="1" fill="#c8c060"/><rect x="9" y="5" width="1" height="1" fill="#e0a040"/><rect x="12" y="6" width="1" height="2" fill="#98c070"/><rect x="7" y="8" width="1" height="1" fill="#d09030"/><rect x="10" y="10" width="2" height="1" fill="#98c070"/><rect x="5" y="11" width="1" height="1" fill="#c8b050"/><rect x="8" y="13" width="1" height="1" fill="#e09030"/><rect x="11" y="12" width="1" height="2" fill="#a0c080"/></svg>
<div style="position:absolute;left:81px;top:405px;line-height:20px;white-space:nowrap;color:#000">17</div>
<div style="position:absolute;left:128px;top:405px;line-height:20px;white-space:nowrap;color:#000">Moosbreite</div>
<div style="position:absolute;right:1180px;top:405px;line-height:20px;white-space:nowrap;color:#000">4,5430</div>
<div style="position:absolute;left:287px;top:406px;line-height:20px;white-space:nowrap;color:#2020c0">WW</div>
<div style="position:absolute;left:341px;top:405px;line-height:20px;white-space:nowrap;color:#000">Cubus</div>
<div style="position:absolute;left:398px;top:405px;line-height:20px;white-space:nowrap;color:#000">Ba</div>
<div style="position:absolute;left:6px;top:426px;width:406px;height:19px;background:#fffde6"></div>
<div style="position:absolute;left:6px;top:426px;width:11px;height:19px;background:#f0f0f0"></div>
<div style="position:absolute;left:287px;top:426px;width:51px;height:19px;background:#ffff00"></div>
<div style="position:absolute;left:5px;top:445px;width:407px;height:1px;background:#a0a0a0"></div>
<div style="position:absolute;left:17px;top:426px;width:1px;height:19px;background:#a0a0a0"></div>
<div style="position:absolute;left:41px;top:426px;width:1px;height:19px;background:#a0a0a0"></div>
<div style="position:absolute;left:76px;top:426px;width:1px;height:19px;background:#a0a0a0"></div>
<div style="position:absolute;left:124px;top:426px;width:1px;height:19px;background:#a0a0a0"></div>
<div style="position:absolute;left:237px;top:426px;width:1px;height:19px;background:#a0a0a0"></div>
<div style="position:absolute;left:286px;top:426px;width:1px;height:19px;background:#a0a0a0"></div>
<div style="position:absolute;left:338px;top:426px;width:1px;height:19px;background:#a0a0a0"></div>
<div style="position:absolute;left:396px;top:426px;width:1px;height:19px;background:#a0a0a0"></div>
<div style="position:absolute;left:23px;top:429px;width:12px;height:12px;background:#fff;border-left:1px solid #a8a8a8;border-top:1px solid #a8a8a8;border-right:1px solid #f0f0f0;border-bottom:1px solid #f0f0f0;box-sizing:border-box"></div>
<svg style="position:absolute;left:50px;top:426px" width="18" height="18" viewBox="0 0 18 18" fill="none"><path d="M4.6 1.5 H16.5 L13.6 16.5 H1.5 V13.5 H2.3 V9.8 H3.2 V5.8 H4.1 Z" fill="#ffff00" stroke="#000" stroke-width="1.5" stroke-linejoin="miter"/><rect x="6" y="3" width="1" height="1" fill="#c8c060"/><rect x="9" y="5" width="1" height="1" fill="#e0a040"/><rect x="12" y="6" width="1" height="2" fill="#98c070"/><rect x="7" y="8" width="1" height="1" fill="#d09030"/><rect x="10" y="10" width="2" height="1" fill="#98c070"/><rect x="5" y="11" width="1" height="1" fill="#c8b050"/><rect x="8" y="13" width="1" height="1" fill="#e09030"/><rect x="11" y="12" width="1" height="2" fill="#a0c080"/></svg>
<div style="position:absolute;left:81px;top:425px;line-height:20px;white-space:nowrap;color:#000">26</div>
<div style="position:absolute;left:128px;top:425px;line-height:20px;white-space:nowrap;color:#000">Maxacker</div>
<div style="position:absolute;right:1180px;top:425px;line-height:20px;white-space:nowrap;color:#000">1,6041</div>
<div style="position:absolute;left:287px;top:426px;line-height:20px;white-space:nowrap;color:#2020c0">WW</div>
<div style="position:absolute;left:341px;top:425px;line-height:20px;white-space:nowrap;color:#000">Cubus</div>
<div style="position:absolute;left:398px;top:425px;line-height:20px;white-space:nowrap;color:#000">Ba</div>
<div style="position:absolute;left:6px;top:446px;width:406px;height:19px;background:#fffde6"></div>
<div style="position:absolute;left:6px;top:446px;width:11px;height:19px;background:#f0f0f0"></div>
<div style="position:absolute;left:287px;top:446px;width:51px;height:19px;background:#ffff00"></div>
<div style="position:absolute;left:5px;top:465px;width:407px;height:1px;background:#a0a0a0"></div>
<div style="position:absolute;left:17px;top:446px;width:1px;height:19px;background:#a0a0a0"></div>
<div style="position:absolute;left:41px;top:446px;width:1px;height:19px;background:#a0a0a0"></div>
<div style="position:absolute;left:76px;top:446px;width:1px;height:19px;background:#a0a0a0"></div>
<div style="position:absolute;left:124px;top:446px;width:1px;height:19px;background:#a0a0a0"></div>
<div style="position:absolute;left:237px;top:446px;width:1px;height:19px;background:#a0a0a0"></div>
<div style="position:absolute;left:286px;top:446px;width:1px;height:19px;background:#a0a0a0"></div>
<div style="position:absolute;left:338px;top:446px;width:1px;height:19px;background:#a0a0a0"></div>
<div style="position:absolute;left:396px;top:446px;width:1px;height:19px;background:#a0a0a0"></div>
<div style="position:absolute;left:23px;top:449px;width:12px;height:12px;background:#fff;border-left:1px solid #a8a8a8;border-top:1px solid #a8a8a8;border-right:1px solid #f0f0f0;border-bottom:1px solid #f0f0f0;box-sizing:border-box"></div>
<svg style="position:absolute;left:50px;top:446px" width="18" height="18" viewBox="0 0 18 18" fill="none"><path d="M4.6 1.5 H16.5 L13.6 16.5 H1.5 V13.5 H2.3 V9.8 H3.2 V5.8 H4.1 Z" fill="#ffff00" stroke="#000" stroke-width="1.5" stroke-linejoin="miter"/><rect x="6" y="3" width="1" height="1" fill="#c8c060"/><rect x="9" y="5" width="1" height="1" fill="#e0a040"/><rect x="12" y="6" width="1" height="2" fill="#98c070"/><rect x="7" y="8" width="1" height="1" fill="#d09030"/><rect x="10" y="10" width="2" height="1" fill="#98c070"/><rect x="5" y="11" width="1" height="1" fill="#c8b050"/><rect x="8" y="13" width="1" height="1" fill="#e09030"/><rect x="11" y="12" width="1" height="2" fill="#a0c080"/></svg>
<div style="position:absolute;left:81px;top:445px;line-height:20px;white-space:nowrap;color:#000">40</div>
<div style="position:absolute;left:128px;top:445px;line-height:20px;white-space:nowrap;color:#000">Am Industriegebiet</div>
<div style="position:absolute;right:1180px;top:445px;line-height:20px;white-space:nowrap;color:#000">1,9874</div>
<div style="position:absolute;left:287px;top:446px;line-height:20px;white-space:nowrap;color:#2020c0">WW</div>
<div style="position:absolute;left:341px;top:445px;line-height:20px;white-space:nowrap;color:#000">Cubus</div>
<div style="position:absolute;left:398px;top:445px;line-height:20px;white-space:nowrap;color:#000">Ba</div>
<div style="position:absolute;left:6px;top:466px;width:406px;height:19px;background:#fffde6"></div>
<div style="position:absolute;left:6px;top:466px;width:11px;height:19px;background:#f0f0f0"></div>
<div style="position:absolute;left:287px;top:466px;width:51px;height:19px;background:#ffff00"></div>
<div style="position:absolute;left:5px;top:485px;width:407px;height:1px;background:#a0a0a0"></div>
<div style="position:absolute;left:17px;top:466px;width:1px;height:19px;background:#a0a0a0"></div>
<div style="position:absolute;left:41px;top:466px;width:1px;height:19px;background:#a0a0a0"></div>
<div style="position:absolute;left:76px;top:466px;width:1px;height:19px;background:#a0a0a0"></div>
<div style="position:absolute;left:124px;top:466px;width:1px;height:19px;background:#a0a0a0"></div>
<div style="position:absolute;left:237px;top:466px;width:1px;height:19px;background:#a0a0a0"></div>
<div style="position:absolute;left:286px;top:466px;width:1px;height:19px;background:#a0a0a0"></div>
<div style="position:absolute;left:338px;top:466px;width:1px;height:19px;background:#a0a0a0"></div>
<div style="position:absolute;left:396px;top:466px;width:1px;height:19px;background:#a0a0a0"></div>
<div style="position:absolute;left:23px;top:469px;width:12px;height:12px;background:#fff;border-left:1px solid #a8a8a8;border-top:1px solid #a8a8a8;border-right:1px solid #f0f0f0;border-bottom:1px solid #f0f0f0;box-sizing:border-box"></div>
<svg style="position:absolute;left:50px;top:466px" width="18" height="18" viewBox="0 0 18 18" fill="none"><path d="M4.6 1.5 H16.5 L13.6 16.5 H1.5 V13.5 H2.3 V9.8 H3.2 V5.8 H4.1 Z" fill="#ffff00" stroke="#000" stroke-width="1.5" stroke-linejoin="miter"/><rect x="6" y="3" width="1" height="1" fill="#c8c060"/><rect x="9" y="5" width="1" height="1" fill="#e0a040"/><rect x="12" y="6" width="1" height="2" fill="#98c070"/><rect x="7" y="8" width="1" height="1" fill="#d09030"/><rect x="10" y="10" width="2" height="1" fill="#98c070"/><rect x="5" y="11" width="1" height="1" fill="#c8b050"/><rect x="8" y="13" width="1" height="1" fill="#e09030"/><rect x="11" y="12" width="1" height="2" fill="#a0c080"/></svg>
<div style="position:absolute;left:81px;top:465px;line-height:20px;white-space:nowrap;color:#000">46</div>
<div style="position:absolute;left:128px;top:465px;line-height:20px;white-space:nowrap;color:#000">Mittlerer&nbsp; Dau</div>
<div style="position:absolute;right:1180px;top:465px;line-height:20px;white-space:nowrap;color:#000">2,3086</div>
<div style="position:absolute;left:287px;top:466px;line-height:20px;white-space:nowrap;color:#2020c0">WW</div>
<div style="position:absolute;left:341px;top:465px;line-height:20px;white-space:nowrap;color:#000">Cubus</div>
<div style="position:absolute;left:398px;top:465px;line-height:20px;white-space:nowrap;color:#000">Ba</div>
<div style="position:absolute;left:6px;top:486px;width:406px;height:19px;background:#fffde6"></div>
<div style="position:absolute;left:6px;top:486px;width:11px;height:19px;background:#f0f0f0"></div>
<div style="position:absolute;left:287px;top:486px;width:51px;height:19px;background:#ffff00"></div>
<div style="position:absolute;left:5px;top:505px;width:407px;height:1px;background:#a0a0a0"></div>
<div style="position:absolute;left:17px;top:486px;width:1px;height:19px;background:#a0a0a0"></div>
<div style="position:absolute;left:41px;top:486px;width:1px;height:19px;background:#a0a0a0"></div>
<div style="position:absolute;left:76px;top:486px;width:1px;height:19px;background:#a0a0a0"></div>
<div style="position:absolute;left:124px;top:486px;width:1px;height:19px;background:#a0a0a0"></div>
<div style="position:absolute;left:237px;top:486px;width:1px;height:19px;background:#a0a0a0"></div>
<div style="position:absolute;left:286px;top:486px;width:1px;height:19px;background:#a0a0a0"></div>
<div style="position:absolute;left:338px;top:486px;width:1px;height:19px;background:#a0a0a0"></div>
<div style="position:absolute;left:396px;top:486px;width:1px;height:19px;background:#a0a0a0"></div>
<div style="position:absolute;left:23px;top:489px;width:12px;height:12px;background:#fff;border-left:1px solid #a8a8a8;border-top:1px solid #a8a8a8;border-right:1px solid #f0f0f0;border-bottom:1px solid #f0f0f0;box-sizing:border-box"></div>
<svg style="position:absolute;left:50px;top:486px" width="18" height="18" viewBox="0 0 18 18" fill="none"><path d="M4.6 1.5 H16.5 L13.6 16.5 H1.5 V13.5 H2.3 V9.8 H3.2 V5.8 H4.1 Z" fill="#ffff00" stroke="#000" stroke-width="1.5" stroke-linejoin="miter"/><rect x="6" y="3" width="1" height="1" fill="#c8c060"/><rect x="9" y="5" width="1" height="1" fill="#e0a040"/><rect x="12" y="6" width="1" height="2" fill="#98c070"/><rect x="7" y="8" width="1" height="1" fill="#d09030"/><rect x="10" y="10" width="2" height="1" fill="#98c070"/><rect x="5" y="11" width="1" height="1" fill="#c8b050"/><rect x="8" y="13" width="1" height="1" fill="#e09030"/><rect x="11" y="12" width="1" height="2" fill="#a0c080"/></svg>
<div style="position:absolute;left:81px;top:485px;line-height:20px;white-space:nowrap;color:#000">11</div>
<div style="position:absolute;left:128px;top:485px;line-height:20px;white-space:nowrap;color:#000">Frankenthal</div>
<div style="position:absolute;right:1180px;top:485px;line-height:20px;white-space:nowrap;color:#000">4,8619</div>
<div style="position:absolute;left:287px;top:486px;line-height:20px;white-space:nowrap;color:#2020c0">WW</div>
<div style="position:absolute;left:341px;top:485px;line-height:20px;white-space:nowrap;color:#000">Cubus</div>
<div style="position:absolute;left:6px;top:506px;width:406px;height:19px;background:#fffde6"></div>
<div style="position:absolute;left:6px;top:506px;width:11px;height:19px;background:#f0f0f0"></div>
<div style="position:absolute;left:287px;top:506px;width:51px;height:19px;background:#ffff00"></div>
<div style="position:absolute;left:5px;top:525px;width:407px;height:1px;background:#a0a0a0"></div>
<div style="position:absolute;left:17px;top:506px;width:1px;height:19px;background:#a0a0a0"></div>
<div style="position:absolute;left:41px;top:506px;width:1px;height:19px;background:#a0a0a0"></div>
<div style="position:absolute;left:76px;top:506px;width:1px;height:19px;background:#a0a0a0"></div>
<div style="position:absolute;left:124px;top:506px;width:1px;height:19px;background:#a0a0a0"></div>
<div style="position:absolute;left:237px;top:506px;width:1px;height:19px;background:#a0a0a0"></div>
<div style="position:absolute;left:286px;top:506px;width:1px;height:19px;background:#a0a0a0"></div>
<div style="position:absolute;left:338px;top:506px;width:1px;height:19px;background:#a0a0a0"></div>
<div style="position:absolute;left:396px;top:506px;width:1px;height:19px;background:#a0a0a0"></div>
<div style="position:absolute;left:23px;top:509px;width:12px;height:12px;background:#fff;border-left:1px solid #a8a8a8;border-top:1px solid #a8a8a8;border-right:1px solid #f0f0f0;border-bottom:1px solid #f0f0f0;box-sizing:border-box"></div>
<svg style="position:absolute;left:50px;top:506px" width="18" height="18" viewBox="0 0 18 18" fill="none"><path d="M4.6 1.5 H16.5 L13.6 16.5 H1.5 V13.5 H2.3 V9.8 H3.2 V5.8 H4.1 Z" fill="#ffff00" stroke="#000" stroke-width="1.5" stroke-linejoin="miter"/><rect x="6" y="3" width="1" height="1" fill="#c8c060"/><rect x="9" y="5" width="1" height="1" fill="#e0a040"/><rect x="12" y="6" width="1" height="2" fill="#98c070"/><rect x="7" y="8" width="1" height="1" fill="#d09030"/><rect x="10" y="10" width="2" height="1" fill="#98c070"/><rect x="5" y="11" width="1" height="1" fill="#c8b050"/><rect x="8" y="13" width="1" height="1" fill="#e09030"/><rect x="11" y="12" width="1" height="2" fill="#a0c080"/></svg>
<div style="position:absolute;left:81px;top:505px;line-height:20px;white-space:nowrap;color:#000">16</div>
<div style="position:absolute;left:128px;top:505px;line-height:20px;white-space:nowrap;color:#000">Wirtsacker</div>
<div style="position:absolute;right:1180px;top:505px;line-height:20px;white-space:nowrap;color:#000">6,5653</div>
<div style="position:absolute;left:287px;top:506px;line-height:20px;white-space:nowrap;color:#2020c0">WW</div>
<div style="position:absolute;left:341px;top:505px;line-height:20px;white-space:nowrap;color:#000">Cubus</div>
<div style="position:absolute;left:6px;top:526px;width:406px;height:19px;background:#fffde6"></div>
<div style="position:absolute;left:6px;top:526px;width:11px;height:19px;background:#f0f0f0"></div>
<div style="position:absolute;left:42px;top:526px;width:370px;height:19px;background:#0078d7"></div>
<div style="position:absolute;left:287px;top:526px;width:51px;height:19px;background:#008000"></div>
<div style="position:absolute;left:5px;top:545px;width:407px;height:1px;background:#a0a0a0"></div>
<div style="position:absolute;left:17px;top:526px;width:1px;height:19px;background:#a0a0a0"></div>
<div style="position:absolute;left:41px;top:526px;width:1px;height:19px;background:#a0a0a0"></div>
<div style="position:absolute;left:76px;top:526px;width:1px;height:19px;background:#a0a0a0"></div>
<div style="position:absolute;left:124px;top:526px;width:1px;height:19px;background:#a0a0a0"></div>
<div style="position:absolute;left:237px;top:526px;width:1px;height:19px;background:#a0a0a0"></div>
<div style="position:absolute;left:286px;top:526px;width:1px;height:19px;background:#a0a0a0"></div>
<div style="position:absolute;left:338px;top:526px;width:1px;height:19px;background:#a0a0a0"></div>
<div style="position:absolute;left:396px;top:526px;width:1px;height:19px;background:#a0a0a0"></div>
<div style="position:absolute;left:23px;top:529px;width:12px;height:12px;background:#fff;border-left:1px solid #a8a8a8;border-top:1px solid #a8a8a8;border-right:1px solid #f0f0f0;border-bottom:1px solid #f0f0f0;box-sizing:border-box"></div>
<svg style="position:absolute;left:50px;top:526px" width="18" height="18" viewBox="0 0 18 18" fill="none"><path d="M4.6 1.5 H16.5 L13.6 16.5 H1.5 V13.5 H2.3 V9.8 H3.2 V5.8 H4.1 Z" fill="#ffff00" stroke="#000" stroke-width="1.5" stroke-linejoin="miter"/><rect x="6" y="3" width="1" height="1" fill="#c8c060"/><rect x="9" y="5" width="1" height="1" fill="#e0a040"/><rect x="12" y="6" width="1" height="2" fill="#98c070"/><rect x="7" y="8" width="1" height="1" fill="#d09030"/><rect x="10" y="10" width="2" height="1" fill="#98c070"/><rect x="5" y="11" width="1" height="1" fill="#c8b050"/><rect x="8" y="13" width="1" height="1" fill="#e09030"/><rect x="11" y="12" width="1" height="2" fill="#a0c080"/></svg>
<div style="position:absolute;left:81px;top:525px;line-height:20px;white-space:nowrap;color:#fff">29</div>
<div style="position:absolute;left:128px;top:525px;line-height:20px;white-space:nowrap;color:#fff">Unterer Anger</div>
<div style="position:absolute;right:1180px;top:525px;line-height:20px;white-space:nowrap;color:#fff">0,3186</div>
<div style="position:absolute;left:287px;top:526px;line-height:20px;white-space:nowrap;color:#ff80ff">Wies</div>
<div style="position:absolute;left:398px;top:525px;line-height:20px;white-space:nowrap;color:#fff">He</div>
<div style="position:absolute;left:9px;top:530px;width:0;height:0;border-top:5.0px solid transparent;border-bottom:5.0px solid transparent;border-left:5px solid #000"></div>
<div style="position:absolute;left:6px;top:546px;width:406px;height:19px;background:#fffde6"></div>
<div style="position:absolute;left:6px;top:546px;width:11px;height:19px;background:#f0f0f0"></div>
<div style="position:absolute;left:287px;top:546px;width:51px;height:19px;background:#008000"></div>
<div style="position:absolute;left:17px;top:546px;width:1px;height:19px;background:#a0a0a0"></div>
<div style="position:absolute;left:41px;top:546px;width:1px;height:19px;background:#a0a0a0"></div>
<div style="position:absolute;left:76px;top:546px;width:1px;height:19px;background:#a0a0a0"></div>
<div style="position:absolute;left:124px;top:546px;width:1px;height:19px;background:#a0a0a0"></div>
<div style="position:absolute;left:237px;top:546px;width:1px;height:19px;background:#a0a0a0"></div>
<div style="position:absolute;left:286px;top:546px;width:1px;height:19px;background:#a0a0a0"></div>
<div style="position:absolute;left:338px;top:546px;width:1px;height:19px;background:#a0a0a0"></div>
<div style="position:absolute;left:396px;top:546px;width:1px;height:19px;background:#a0a0a0"></div>
<div style="position:absolute;left:23px;top:549px;width:12px;height:12px;background:#fff;border-left:1px solid #a8a8a8;border-top:1px solid #a8a8a8;border-right:1px solid #f0f0f0;border-bottom:1px solid #f0f0f0;box-sizing:border-box"></div>
<svg style="position:absolute;left:50px;top:546px" width="18" height="18" viewBox="0 0 18 18" fill="none"><path d="M4.6 1.5 H16.5 L13.6 16.5 H1.5 V13.5 H2.3 V9.8 H3.2 V5.8 H4.1 Z" fill="#ffff00" stroke="#000" stroke-width="1.5" stroke-linejoin="miter"/><rect x="6" y="3" width="1" height="1" fill="#c8c060"/><rect x="9" y="5" width="1" height="1" fill="#e0a040"/><rect x="12" y="6" width="1" height="2" fill="#98c070"/><rect x="7" y="8" width="1" height="1" fill="#d09030"/><rect x="10" y="10" width="2" height="1" fill="#98c070"/><rect x="5" y="11" width="1" height="1" fill="#c8b050"/><rect x="8" y="13" width="1" height="1" fill="#e09030"/><rect x="11" y="12" width="1" height="2" fill="#a0c080"/></svg>
<div style="position:absolute;left:81px;top:545px;line-height:20px;white-space:nowrap;color:#000">37</div>
<div style="position:absolute;left:128px;top:545px;line-height:20px;white-space:nowrap;color:#000">Stiel Wiese</div>
<div style="position:absolute;right:1180px;top:545px;line-height:20px;white-space:nowrap;color:#000">0,9523</div>
<div style="position:absolute;left:287px;top:546px;line-height:20px;white-space:nowrap;color:#ff80ff">Wies</div>
<div style="position:absolute;left:398px;top:545px;line-height:20px;white-space:nowrap;color:#000">He</div>
<div style="position:absolute;left:412px;top:107px;width:17px;height:503px;background-color:#f4f4f4;background-image:linear-gradient(45deg,#e6e6e6 25%,transparent 25%,transparent 75%,#e6e6e6 75%),linear-gradient(45deg,#e6e6e6 25%,transparent 25%,transparent 75%,#e6e6e6 75%);background-size:2px 2px;background-position:0 0,1px 1px"></div>
<div style="position:absolute;left:412px;top:107px;width:17px;height:17px;background:#f0f0f0;border-right:1px solid #a0a0a0;border-bottom:1px solid #a0a0a0;box-sizing:border-box"></div>
<div style="position:absolute;left:417px;top:114px;width:0;height:0;border-left:4.0px solid transparent;border-right:4.0px solid transparent;border-bottom:4px solid #000"></div>
<div style="position:absolute;left:412px;top:176px;width:17px;height:352px;background:#f0f0f0;border-right:1px solid #a0a0a0;border-bottom:1px solid #a0a0a0;box-sizing:border-box"></div>
<div style="position:absolute;left:412px;top:594px;width:17px;height:15px;background:#f0f0f0;border-right:1px solid #a0a0a0;border-bottom:1px solid #a0a0a0;box-sizing:border-box"></div>
<div style="position:absolute;left:417px;top:600px;width:0;height:0;border-left:4.0px solid transparent;border-right:4.0px solid transparent;border-top:4px solid #000"></div>
<div style="position:absolute;left:5px;top:564px;width:407px;height:46px;background:#a0a0a0"></div>
<div style="position:absolute;left:19px;top:577px;width:253px;height:21px;background:#fffde6;border-bottom:1px solid #fff;border-right:1px solid #fff;box-sizing:border-box"></div>
<div style="position:absolute;left:21px;top:577px;line-height:20px;white-space:nowrap;color:#606060">Suchtext hier eingeben...</div>
<div style="position:absolute;left:254px;top:579px;width:16px;height:17px;background:#f0f0f0;border-right:1px solid #a0a0a0;border-bottom:1px solid #a0a0a0;box-sizing:border-box"></div>
<div style="position:absolute;left:258px;top:586px;width:0;height:0;border-left:3.5px solid transparent;border-right:3.5px solid transparent;border-top:4px solid #111"></div>
<div style="position:absolute;left:276px;top:576px;width:59px;height:22px;background:#f0f0f0"></div>
<div style="position:absolute;left:276px;width:59px;top:577px;line-height:20px;white-space:nowrap;text-align:center;">Suchen</div>
<div style="position:absolute;left:340px;top:576px;width:59px;height:22px;background:#f0f0f0"></div>
<div style="position:absolute;left:340px;width:59px;top:577px;line-height:20px;white-space:nowrap;text-align:center;">Löschen</div>
<div style="position:absolute;left:5px;top:610px;width:424px;height:17px;background-color:#f4f4f4;background-image:linear-gradient(45deg,#e6e6e6 25%,transparent 25%,transparent 75%,#e6e6e6 75%),linear-gradient(45deg,#e6e6e6 25%,transparent 25%,transparent 75%,#e6e6e6 75%);background-size:2px 2px;background-position:0 0,1px 1px"></div>
<div style="position:absolute;left:5px;top:610px;width:17px;height:17px;background:#f0f0f0;border-right:1px solid #a0a0a0;box-sizing:border-box"></div>
<div style="position:absolute;left:11px;top:614px;width:0;height:0;border-top:4.0px solid transparent;border-bottom:4.0px solid transparent;border-right:4px solid #000"></div>
<div style="position:absolute;left:22px;top:611px;width:222px;height:16px;background:#f0f0f0;border-right:1px solid #a0a0a0;border-bottom:1px solid #a0a0a0;box-sizing:border-box"></div>
<div style="position:absolute;left:394px;top:610px;width:18px;height:17px;background:#f0f0f0;border-left:1px solid #c0c0c0;box-sizing:border-box"></div>
<div style="position:absolute;left:402px;top:614px;width:0;height:0;border-top:4.0px solid transparent;border-bottom:4.0px solid transparent;border-left:4px solid #000"></div>
<div style="position:absolute;left:412px;top:610px;width:17px;height:17px;background:#f0f0f0"></div>
<div style="position:absolute;left:433px;top:48px;width:10px;height:579px;background:#f0f0f0"></div>
<div style="position:absolute;left:433px;top:76px;width:1px;height:551px;background:#a8a8a8"></div>
<div style="position:absolute;left:440px;top:76px;width:2px;height:551px;background:#a0a0a0"></div>
<div style="position:absolute;left:434px;top:381px;width:6px;height:250px;box-sizing:border-box;border:1px solid #b0b0b0;border-radius:2px 2px 0 0;background:linear-gradient(90deg,#fff 0,#fff 40%,#c4dced 60%,#a9cbe3 100%)"></div>
<svg style="position:absolute;left:434px;top:507px" width="6" height="8" viewBox="0 0 6 8" fill="none"><path d="M4.5 0.5 L1 4 L4.5 7.5" stroke="#000" stroke-width="1.5" fill="none"/></svg>
<div style="position:absolute;left:441px;top:75px;width:1023px;height:552px;background:#fff"></div>
<div style="position:absolute;left:441px;top:103px;width:1023px;height:1px;background:#a9a9a9"></div>
<div style="position:absolute;left:442px;top:105px;width:1022px;height:31px;background:#fff"></div>
<div style="position:absolute;left:442px;top:106px;width:1022px;height:30px;background:#c2dcc2"></div>
<div style="position:absolute;left:453px;top:106px;width:1px;height:29px;background:#9aa"></div>
<div style="position:absolute;left:454px;top:106px;width:1px;height:29px;background:#fff"></div>
<div style="position:absolute;left:459px;top:106px;width:1px;height:29px;background:#9aa"></div>
<div style="position:absolute;left:460px;top:106px;width:1px;height:29px;background:#fff"></div>
<div style="position:absolute;left:566px;top:106px;width:1px;height:29px;background:#9aa"></div>
<div style="position:absolute;left:567px;top:106px;width:1px;height:29px;background:#fff"></div>
<div style="position:absolute;left:630px;top:106px;width:1px;height:29px;background:#9aa"></div>
<div style="position:absolute;left:631px;top:106px;width:1px;height:29px;background:#fff"></div>
<div style="position:absolute;left:730px;top:106px;width:1px;height:29px;background:#9aa"></div>
<div style="position:absolute;left:731px;top:106px;width:1px;height:29px;background:#fff"></div>
<div style="position:absolute;left:788px;top:106px;width:1px;height:29px;background:#9aa"></div>
<div style="position:absolute;left:789px;top:106px;width:1px;height:29px;background:#fff"></div>
<div style="position:absolute;left:886px;top:106px;width:1px;height:29px;background:#9aa"></div>
<div style="position:absolute;left:887px;top:106px;width:1px;height:29px;background:#fff"></div>
<div style="position:absolute;left:944px;top:106px;width:1px;height:29px;background:#9aa"></div>
<div style="position:absolute;left:945px;top:106px;width:1px;height:29px;background:#fff"></div>
<div style="position:absolute;left:1042px;top:106px;width:1px;height:29px;background:#9aa"></div>
<div style="position:absolute;left:1043px;top:106px;width:1px;height:29px;background:#fff"></div>
<div style="position:absolute;left:1146px;top:106px;width:1px;height:29px;background:#9aa"></div>
<div style="position:absolute;left:1147px;top:106px;width:1px;height:29px;background:#fff"></div>
<div style="position:absolute;left:1213px;top:106px;width:1px;height:29px;background:#9aa"></div>
<div style="position:absolute;left:1214px;top:106px;width:1px;height:29px;background:#fff"></div>
<div style="position:absolute;left:1299px;top:106px;width:1px;height:29px;background:#9aa"></div>
<div style="position:absolute;left:1300px;top:106px;width:1px;height:29px;background:#fff"></div>
<div style="position:absolute;left:1459px;top:106px;width:1px;height:29px;background:#9aa"></div>
<div style="position:absolute;left:1460px;top:106px;width:1px;height:29px;background:#fff"></div>
<div style="position:absolute;left:442px;top:136px;width:1022px;height:1px;background:#a0a0a0"></div>
<svg style="position:absolute;left:445px;top:116px" width="8" height="10" viewBox="0 0 8 10" fill="none"><path d="M0 0.5 H1.5 M2.5 0.5 H7 M0 2.5 H1.5 M2.5 2.5 H7 M0 4.5 H1.5 M2.5 4.5 H7 M0 6.5 H1.5 M2.5 6.5 H7 M0 8.5 H1.5 M2.5 8.5 H7" stroke="#000" stroke-width="1"/></svg>
<div style="position:absolute;left:462px;top:111px;line-height:20px;white-space:nowrap;">Standardv</div>
<svg style="position:absolute;left:553px;top:108px" width="11" height="11" viewBox="0 0 11 11" fill="none"><rect x="0.5" y="0.5" width="10" height="10" fill="none" stroke="#97a897"/><path d="M2.5 2.5 H8.5 L6 5.5 V8.5 H5 V5.5 Z" fill="none" stroke="#8a968a" stroke-width="0.9"/></svg>
<div style="position:absolute;left:566px;width:52px;top:111px;line-height:20px;white-space:nowrap;text-align:center;">Einheit</div>
<svg style="position:absolute;left:617px;top:108px" width="11" height="11" viewBox="0 0 11 11" fill="none"><rect x="0.5" y="0.5" width="10" height="10" fill="none" stroke="#97a897"/><path d="M2.5 2.5 H8.5 L6 5.5 V8.5 H5 V5.5 Z" fill="none" stroke="#8a968a" stroke-width="0.9"/></svg>
<div style="position:absolute;left:638px;top:111px;line-height:20px;white-space:nowrap;">Stundenleistung</div>
<svg style="position:absolute;left:717px;top:108px" width="11" height="11" viewBox="0 0 11 11" fill="none"><rect x="0.5" y="0.5" width="10" height="10" fill="none" stroke="#97a897"/><path d="M2.5 2.5 H8.5 L6 5.5 V8.5 H5 V5.5 Z" fill="none" stroke="#8a968a" stroke-width="0.9"/></svg>
<div style="position:absolute;right:691px;top:111px;line-height:20px;white-space:nowrap;">VSt.</div>
<svg style="position:absolute;left:775px;top:108px" width="11" height="11" viewBox="0 0 11 11" fill="none"><rect x="0.5" y="0.5" width="10" height="10" fill="none" stroke="#97a897"/><path d="M2.5 2.5 H8.5 L6 5.5 V8.5 H5 V5.5 Z" fill="none" stroke="#8a968a" stroke-width="0.9"/></svg>
<div style="position:absolute;right:593px;top:111px;line-height:20px;white-space:nowrap;">Kosten (Netto)</div>
<svg style="position:absolute;left:873px;top:108px" width="11" height="11" viewBox="0 0 11 11" fill="none"><rect x="0.5" y="0.5" width="10" height="10" fill="none" stroke="#97a897"/><path d="M2.5 2.5 H8.5 L6 5.5 V8.5 H5 V5.5 Z" fill="none" stroke="#8a968a" stroke-width="0.9"/></svg>
<div style="position:absolute;left:889px;top:111px;line-height:20px;white-space:nowrap;">USt.</div>
<svg style="position:absolute;left:931px;top:108px" width="11" height="11" viewBox="0 0 11 11" fill="none"><rect x="0.5" y="0.5" width="10" height="10" fill="none" stroke="#97a897"/><path d="M2.5 2.5 H8.5 L6 5.5 V8.5 H5 V5.5 Z" fill="none" stroke="#8a968a" stroke-width="0.9"/></svg>
<div style="position:absolute;right:437px;top:111px;line-height:20px;white-space:nowrap;">Erlöse (Netto)</div>
<svg style="position:absolute;left:1029px;top:108px" width="11" height="11" viewBox="0 0 11 11" fill="none"><rect x="0.5" y="0.5" width="10" height="10" fill="none" stroke="#97a897"/><path d="M2.5 2.5 H8.5 L6 5.5 V8.5 H5 V5.5 Z" fill="none" stroke="#8a968a" stroke-width="0.9"/></svg>
<div style="position:absolute;left:1042px;width:92px;top:111px;line-height:20px;white-space:nowrap;text-align:center;">Kennzeichen</div>
<svg style="position:absolute;left:1133px;top:108px" width="11" height="11" viewBox="0 0 11 11" fill="none"><rect x="0.5" y="0.5" width="10" height="10" fill="none" stroke="#97a897"/><path d="M2.5 2.5 H8.5 L6 5.5 V8.5 H5 V5.5 Z" fill="none" stroke="#8a968a" stroke-width="0.9"/></svg>
<div style="position:absolute;left:1146px;width:55px;top:111px;line-height:20px;white-space:nowrap;text-align:center;">HU</div>
<svg style="position:absolute;left:1200px;top:108px" width="11" height="11" viewBox="0 0 11 11" fill="none"><rect x="0.5" y="0.5" width="10" height="10" fill="none" stroke="#97a897"/><path d="M2.5 2.5 H8.5 L6 5.5 V8.5 H5 V5.5 Z" fill="none" stroke="#8a968a" stroke-width="0.9"/></svg>
<div style="position:absolute;left:1218px;top:111px;line-height:20px;white-space:nowrap;">Leistung [kW]</div>
<svg style="position:absolute;left:1286px;top:108px" width="11" height="11" viewBox="0 0 11 11" fill="none"><rect x="0.5" y="0.5" width="10" height="10" fill="none" stroke="#97a897"/><path d="M2.5 2.5 H8.5 L6 5.5 V8.5 H5 V5.5 Z" fill="none" stroke="#8a968a" stroke-width="0.9"/></svg>
<div style="position:absolute;left:1302px;top:111px;line-height:20px;white-space:nowrap;">Kostenstelle</div>
<svg style="position:absolute;left:1446px;top:108px" width="11" height="11" viewBox="0 0 11 11" fill="none"><rect x="0.5" y="0.5" width="10" height="10" fill="none" stroke="#97a897"/><path d="M2.5 2.5 H8.5 L6 5.5 V8.5 H5 V5.5 Z" fill="none" stroke="#8a968a" stroke-width="0.9"/></svg>
<div style="position:absolute;left:1462px;top:117px;width:2px;height:8px;background:#1a1a40"></div>
<svg style="position:absolute;left:453px;top:107px" width="6" height="12" viewBox="0 0 6 12" fill="none"><path d="M0.5 1.5 H4.5 V11.5 H0.5" fill="none" stroke="#97a897"/></svg>
<div style="position:absolute;left:442px;top:137px;width:11px;height:19px;background:#f0f0f0;border-left:1px solid #fff;border-top:1px solid #fff;box-sizing:border-box"></div>
<div style="position:absolute;left:454px;top:137px;width:1010px;height:19px;background:#0078d7"></div>
<div style="position:absolute;left:454px;top:137px;width:845px;height:1px;background-image:linear-gradient(90deg,#e8a060 50%,transparent 50%);background-size:2px 1px"></div>
<div style="position:absolute;left:454px;top:155px;width:845px;height:1px;background-image:linear-gradient(90deg,#e8a060 50%,transparent 50%);background-size:2px 1px"></div>
<div style="position:absolute;left:1300px;top:137px;width:159px;height:19px;background:#fff;border-top:1px dotted #000;border-bottom:1px dotted #000;box-sizing:border-box"></div>
<div style="position:absolute;left:442px;top:156px;width:1022px;height:1px;background:#a0a0a0"></div>
<div style="position:absolute;left:441px;top:136px;width:1px;height:21px;background:#a0a0a0"></div>
<div style="position:absolute;left:453px;top:137px;width:1px;height:19px;background:#a0a0a0"></div>
<div style="position:absolute;left:459px;top:137px;width:1px;height:19px;background:#a0a0a0"></div>
<div style="position:absolute;left:566px;top:137px;width:1px;height:19px;background:#a0a0a0"></div>
<div style="position:absolute;left:630px;top:137px;width:1px;height:19px;background:#a0a0a0"></div>
<div style="position:absolute;left:730px;top:137px;width:1px;height:19px;background:#a0a0a0"></div>
<div style="position:absolute;left:788px;top:137px;width:1px;height:19px;background:#a0a0a0"></div>
<div style="position:absolute;left:886px;top:137px;width:1px;height:19px;background:#a0a0a0"></div>
<div style="position:absolute;left:944px;top:137px;width:1px;height:19px;background:#a0a0a0"></div>
<div style="position:absolute;left:1042px;top:137px;width:1px;height:19px;background:#a0a0a0"></div>
<div style="position:absolute;left:1146px;top:137px;width:1px;height:19px;background:#a0a0a0"></div>
<div style="position:absolute;left:1213px;top:137px;width:1px;height:19px;background:#a0a0a0"></div>
<div style="position:absolute;left:1299px;top:137px;width:1px;height:19px;background:#a0a0a0"></div>
<div style="position:absolute;left:1459px;top:137px;width:1px;height:19px;background:#a0a0a0"></div>
<div style="position:absolute;left:463px;top:136px;line-height:20px;white-space:nowrap;color:#fff">Standard</div>
<div style="position:absolute;left:566px;width:64px;top:136px;line-height:20px;white-space:nowrap;text-align:center;color:#fff">Std</div>
<div style="position:absolute;right:580px;top:136px;line-height:20px;white-space:nowrap;color:#fff">25,1600</div>
<div style="position:absolute;right:522px;top:136px;line-height:20px;white-space:nowrap;color:#fff">19,00 %</div>
<div style="position:absolute;right:424px;top:136px;line-height:20px;white-space:nowrap;color:#fff">28,0000</div>
<svg style="position:absolute;left:446px;top:141px" width="6" height="10" viewBox="0 0 6 10" fill="none"><path d="M1 1 L5 5 L1 9" stroke="#000" stroke-width="1.3" fill="none"/><path d="M1 3 L3 5 L1 7 Z" fill="#000"/></svg>
<div style="position:absolute;left:442px;top:157px;width:11px;height:19px;background:#f0f0f0;border-left:1px solid #fff;border-top:1px solid #fff;box-sizing:border-box"></div>
<div style="position:absolute;left:567px;top:157px;width:63px;height:19px;background:#ffffcc"></div>
<div style="position:absolute;left:631px;top:157px;width:99px;height:19px;background:#ffffcc"></div>
<div style="position:absolute;left:442px;top:176px;width:1022px;height:1px;background:#a0a0a0"></div>
<div style="position:absolute;left:441px;top:156px;width:1px;height:21px;background:#a0a0a0"></div>
<div style="position:absolute;left:453px;top:157px;width:1px;height:19px;background:#a0a0a0"></div>
<div style="position:absolute;left:459px;top:157px;width:1px;height:19px;background:#a0a0a0"></div>
<div style="position:absolute;left:566px;top:157px;width:1px;height:19px;background:#a0a0a0"></div>
<div style="position:absolute;left:630px;top:157px;width:1px;height:19px;background:#a0a0a0"></div>
<div style="position:absolute;left:730px;top:157px;width:1px;height:19px;background:#a0a0a0"></div>
<div style="position:absolute;left:788px;top:157px;width:1px;height:19px;background:#a0a0a0"></div>
<div style="position:absolute;left:886px;top:157px;width:1px;height:19px;background:#a0a0a0"></div>
<div style="position:absolute;left:944px;top:157px;width:1px;height:19px;background:#a0a0a0"></div>
<div style="position:absolute;left:1042px;top:157px;width:1px;height:19px;background:#a0a0a0"></div>
<div style="position:absolute;left:1146px;top:157px;width:1px;height:19px;background:#a0a0a0"></div>
<div style="position:absolute;left:1213px;top:157px;width:1px;height:19px;background:#a0a0a0"></div>
<div style="position:absolute;left:1299px;top:157px;width:1px;height:19px;background:#a0a0a0"></div>
<div style="position:absolute;left:1459px;top:157px;width:1px;height:19px;background:#a0a0a0"></div>
<div style="position:absolute;left:463px;top:156px;line-height:20px;white-space:nowrap;color:#000">Standard</div>
<div style="position:absolute;left:566px;width:64px;top:156px;line-height:20px;white-space:nowrap;text-align:center;color:#000">Std</div>
<div style="position:absolute;right:580px;top:156px;line-height:20px;white-space:nowrap;color:#000">4,8500</div>
<div style="position:absolute;right:522px;top:156px;line-height:20px;white-space:nowrap;color:#000">19,00 %</div>
<div style="position:absolute;left:442px;top:177px;width:11px;height:19px;background:#f0f0f0;border-left:1px solid #fff;border-top:1px solid #fff;box-sizing:border-box"></div>
<div style="position:absolute;left:567px;top:177px;width:63px;height:19px;background:#ffffcc"></div>
<div style="position:absolute;left:442px;top:196px;width:1022px;height:1px;background:#a0a0a0"></div>
<div style="position:absolute;left:441px;top:176px;width:1px;height:21px;background:#a0a0a0"></div>
<div style="position:absolute;left:453px;top:177px;width:1px;height:19px;background:#a0a0a0"></div>
<div style="position:absolute;left:459px;top:177px;width:1px;height:19px;background:#a0a0a0"></div>
<div style="position:absolute;left:566px;top:177px;width:1px;height:19px;background:#a0a0a0"></div>
<div style="position:absolute;left:630px;top:177px;width:1px;height:19px;background:#a0a0a0"></div>
<div style="position:absolute;left:730px;top:177px;width:1px;height:19px;background:#a0a0a0"></div>
<div style="position:absolute;left:788px;top:177px;width:1px;height:19px;background:#a0a0a0"></div>
<div style="position:absolute;left:886px;top:177px;width:1px;height:19px;background:#a0a0a0"></div>
<div style="position:absolute;left:944px;top:177px;width:1px;height:19px;background:#a0a0a0"></div>
<div style="position:absolute;left:1042px;top:177px;width:1px;height:19px;background:#a0a0a0"></div>
<div style="position:absolute;left:1146px;top:177px;width:1px;height:19px;background:#a0a0a0"></div>
<div style="position:absolute;left:1213px;top:177px;width:1px;height:19px;background:#a0a0a0"></div>
<div style="position:absolute;left:1299px;top:177px;width:1px;height:19px;background:#a0a0a0"></div>
<div style="position:absolute;left:1459px;top:177px;width:1px;height:19px;background:#a0a0a0"></div>
<div style="position:absolute;left:463px;top:176px;line-height:20px;white-space:nowrap;color:#000">Standard</div>
<div style="position:absolute;left:566px;width:64px;top:176px;line-height:20px;white-space:nowrap;text-align:center;color:#000">ha</div>
<div style="position:absolute;right:580px;top:176px;line-height:20px;white-space:nowrap;color:#000">1,0000</div>
<div style="position:absolute;right:522px;top:176px;line-height:20px;white-space:nowrap;color:#000">19,00 %</div>
<div style="position:absolute;right:424px;top:176px;line-height:20px;white-space:nowrap;color:#000">18,0000</div>
<div style="position:absolute;left:442px;top:197px;width:11px;height:19px;background:#f0f0f0;border-left:1px solid #fff;border-top:1px solid #fff;box-sizing:border-box"></div>
<div style="position:absolute;left:567px;top:197px;width:63px;height:19px;background:#ffffcc"></div>
<div style="position:absolute;left:631px;top:197px;width:99px;height:19px;background:#ffffcc"></div>
<div style="position:absolute;left:442px;top:216px;width:1022px;height:1px;background:#a0a0a0"></div>
<div style="position:absolute;left:441px;top:196px;width:1px;height:21px;background:#a0a0a0"></div>
<div style="position:absolute;left:453px;top:197px;width:1px;height:19px;background:#a0a0a0"></div>
<div style="position:absolute;left:459px;top:197px;width:1px;height:19px;background:#a0a0a0"></div>
<div style="position:absolute;left:566px;top:197px;width:1px;height:19px;background:#a0a0a0"></div>
<div style="position:absolute;left:630px;top:197px;width:1px;height:19px;background:#a0a0a0"></div>
<div style="position:absolute;left:730px;top:197px;width:1px;height:19px;background:#a0a0a0"></div>
<div style="position:absolute;left:788px;top:197px;width:1px;height:19px;background:#a0a0a0"></div>
<div style="position:absolute;left:886px;top:197px;width:1px;height:19px;background:#a0a0a0"></div>
<div style="position:absolute;left:944px;top:197px;width:1px;height:19px;background:#a0a0a0"></div>
<div style="position:absolute;left:1042px;top:197px;width:1px;height:19px;background:#a0a0a0"></div>
<div style="position:absolute;left:1146px;top:197px;width:1px;height:19px;background:#a0a0a0"></div>
<div style="position:absolute;left:1213px;top:197px;width:1px;height:19px;background:#a0a0a0"></div>
<div style="position:absolute;left:1299px;top:197px;width:1px;height:19px;background:#a0a0a0"></div>
<div style="position:absolute;left:1459px;top:197px;width:1px;height:19px;background:#a0a0a0"></div>
<div style="position:absolute;left:463px;top:196px;line-height:20px;white-space:nowrap;color:#000">Standard</div>
<div style="position:absolute;left:566px;width:64px;top:196px;line-height:20px;white-space:nowrap;text-align:center;color:#000">Std</div>
<div style="position:absolute;right:580px;top:196px;line-height:20px;white-space:nowrap;color:#000">15,0000</div>
<div style="position:absolute;right:522px;top:196px;line-height:20px;white-space:nowrap;color:#000">19,00 %</div>
<div style="position:absolute;right:424px;top:196px;line-height:20px;white-space:nowrap;color:#000">32,0000</div>
<div style="position:absolute;left:442px;top:217px;width:11px;height:19px;background:#f0f0f0;border-left:1px solid #fff;border-top:1px solid #fff;box-sizing:border-box"></div>
<div style="position:absolute;left:567px;top:217px;width:63px;height:19px;background:#ffffcc"></div>
<div style="position:absolute;left:442px;top:236px;width:1022px;height:1px;background:#a0a0a0"></div>
<div style="position:absolute;left:441px;top:216px;width:1px;height:21px;background:#a0a0a0"></div>
<div style="position:absolute;left:453px;top:217px;width:1px;height:19px;background:#a0a0a0"></div>
<div style="position:absolute;left:459px;top:217px;width:1px;height:19px;background:#a0a0a0"></div>
<div style="position:absolute;left:566px;top:217px;width:1px;height:19px;background:#a0a0a0"></div>
<div style="position:absolute;left:630px;top:217px;width:1px;height:19px;background:#a0a0a0"></div>
<div style="position:absolute;left:730px;top:217px;width:1px;height:19px;background:#a0a0a0"></div>
<div style="position:absolute;left:788px;top:217px;width:1px;height:19px;background:#a0a0a0"></div>
<div style="position:absolute;left:886px;top:217px;width:1px;height:19px;background:#a0a0a0"></div>
<div style="position:absolute;left:944px;top:217px;width:1px;height:19px;background:#a0a0a0"></div>
<div style="position:absolute;left:1042px;top:217px;width:1px;height:19px;background:#a0a0a0"></div>
<div style="position:absolute;left:1146px;top:217px;width:1px;height:19px;background:#a0a0a0"></div>
<div style="position:absolute;left:1213px;top:217px;width:1px;height:19px;background:#a0a0a0"></div>
<div style="position:absolute;left:1299px;top:217px;width:1px;height:19px;background:#a0a0a0"></div>
<div style="position:absolute;left:1459px;top:217px;width:1px;height:19px;background:#a0a0a0"></div>
<div style="position:absolute;left:463px;top:216px;line-height:20px;white-space:nowrap;color:#000">Standard</div>
<div style="position:absolute;left:566px;width:64px;top:216px;line-height:20px;white-space:nowrap;text-align:center;color:#000">ha</div>
<div style="position:absolute;right:580px;top:216px;line-height:20px;white-space:nowrap;color:#000">1,0000</div>
<div style="position:absolute;right:522px;top:216px;line-height:20px;white-space:nowrap;color:#000">19,00 %</div>
<div style="position:absolute;right:424px;top:216px;line-height:20px;white-space:nowrap;color:#000">43,0000</div>
<div style="position:absolute;left:442px;top:237px;width:11px;height:19px;background:#f0f0f0;border-left:1px solid #fff;border-top:1px solid #fff;box-sizing:border-box"></div>
<div style="position:absolute;left:567px;top:237px;width:63px;height:19px;background:#ffffcc"></div>
<div style="position:absolute;left:442px;top:256px;width:1022px;height:1px;background:#a0a0a0"></div>
<div style="position:absolute;left:441px;top:236px;width:1px;height:21px;background:#a0a0a0"></div>
<div style="position:absolute;left:453px;top:237px;width:1px;height:19px;background:#a0a0a0"></div>
<div style="position:absolute;left:459px;top:237px;width:1px;height:19px;background:#a0a0a0"></div>
<div style="position:absolute;left:566px;top:237px;width:1px;height:19px;background:#a0a0a0"></div>
<div style="position:absolute;left:630px;top:237px;width:1px;height:19px;background:#a0a0a0"></div>
<div style="position:absolute;left:730px;top:237px;width:1px;height:19px;background:#a0a0a0"></div>
<div style="position:absolute;left:788px;top:237px;width:1px;height:19px;background:#a0a0a0"></div>
<div style="position:absolute;left:886px;top:237px;width:1px;height:19px;background:#a0a0a0"></div>
<div style="position:absolute;left:944px;top:237px;width:1px;height:19px;background:#a0a0a0"></div>
<div style="position:absolute;left:1042px;top:237px;width:1px;height:19px;background:#a0a0a0"></div>
<div style="position:absolute;left:1146px;top:237px;width:1px;height:19px;background:#a0a0a0"></div>
<div style="position:absolute;left:1213px;top:237px;width:1px;height:19px;background:#a0a0a0"></div>
<div style="position:absolute;left:1299px;top:237px;width:1px;height:19px;background:#a0a0a0"></div>
<div style="position:absolute;left:1459px;top:237px;width:1px;height:19px;background:#a0a0a0"></div>
<div style="position:absolute;left:463px;top:236px;line-height:20px;white-space:nowrap;color:#000">Standard</div>
<div style="position:absolute;left:566px;width:64px;top:236px;line-height:20px;white-space:nowrap;text-align:center;color:#000">ha</div>
<div style="position:absolute;right:580px;top:236px;line-height:20px;white-space:nowrap;color:#000">8,7500</div>
<div style="position:absolute;right:522px;top:236px;line-height:20px;white-space:nowrap;color:#000">19,00 %</div>
<div style="position:absolute;right:424px;top:236px;line-height:20px;white-space:nowrap;color:#000">7,0000</div>
<div style="position:absolute;left:442px;top:257px;width:11px;height:19px;background:#f0f0f0;border-left:1px solid #fff;border-top:1px solid #fff;box-sizing:border-box"></div>
<div style="position:absolute;left:567px;top:257px;width:63px;height:19px;background:#ffffcc"></div>
<div style="position:absolute;left:442px;top:276px;width:1022px;height:1px;background:#a0a0a0"></div>
<div style="position:absolute;left:441px;top:256px;width:1px;height:21px;background:#a0a0a0"></div>
<div style="position:absolute;left:453px;top:257px;width:1px;height:19px;background:#a0a0a0"></div>
<div style="position:absolute;left:459px;top:257px;width:1px;height:19px;background:#a0a0a0"></div>
<div style="position:absolute;left:566px;top:257px;width:1px;height:19px;background:#a0a0a0"></div>
<div style="position:absolute;left:630px;top:257px;width:1px;height:19px;background:#a0a0a0"></div>
<div style="position:absolute;left:730px;top:257px;width:1px;height:19px;background:#a0a0a0"></div>
<div style="position:absolute;left:788px;top:257px;width:1px;height:19px;background:#a0a0a0"></div>
<div style="position:absolute;left:886px;top:257px;width:1px;height:19px;background:#a0a0a0"></div>
<div style="position:absolute;left:944px;top:257px;width:1px;height:19px;background:#a0a0a0"></div>
<div style="position:absolute;left:1042px;top:257px;width:1px;height:19px;background:#a0a0a0"></div>
<div style="position:absolute;left:1146px;top:257px;width:1px;height:19px;background:#a0a0a0"></div>
<div style="position:absolute;left:1213px;top:257px;width:1px;height:19px;background:#a0a0a0"></div>
<div style="position:absolute;left:1299px;top:257px;width:1px;height:19px;background:#a0a0a0"></div>
<div style="position:absolute;left:1459px;top:257px;width:1px;height:19px;background:#a0a0a0"></div>
<div style="position:absolute;left:463px;top:256px;line-height:20px;white-space:nowrap;color:#000">Standard</div>
<div style="position:absolute;left:566px;width:64px;top:256px;line-height:20px;white-space:nowrap;text-align:center;color:#000">ha</div>
<div style="position:absolute;right:580px;top:256px;line-height:20px;white-space:nowrap;color:#000">26,5900</div>
<div style="position:absolute;right:522px;top:256px;line-height:20px;white-space:nowrap;color:#000">19,00 %</div>
<div style="position:absolute;right:424px;top:256px;line-height:20px;white-space:nowrap;color:#000">32,0000</div>
<div style="position:absolute;left:442px;top:277px;width:11px;height:19px;background:#f0f0f0;border-left:1px solid #fff;border-top:1px solid #fff;box-sizing:border-box"></div>
<div style="position:absolute;left:567px;top:277px;width:63px;height:19px;background:#ffffcc"></div>
<div style="position:absolute;left:442px;top:296px;width:1022px;height:1px;background:#a0a0a0"></div>
<div style="position:absolute;left:441px;top:276px;width:1px;height:21px;background:#a0a0a0"></div>
<div style="position:absolute;left:453px;top:277px;width:1px;height:19px;background:#a0a0a0"></div>
<div style="position:absolute;left:459px;top:277px;width:1px;height:19px;background:#a0a0a0"></div>
<div style="position:absolute;left:566px;top:277px;width:1px;height:19px;background:#a0a0a0"></div>
<div style="position:absolute;left:630px;top:277px;width:1px;height:19px;background:#a0a0a0"></div>
<div style="position:absolute;left:730px;top:277px;width:1px;height:19px;background:#a0a0a0"></div>
<div style="position:absolute;left:788px;top:277px;width:1px;height:19px;background:#a0a0a0"></div>
<div style="position:absolute;left:886px;top:277px;width:1px;height:19px;background:#a0a0a0"></div>
<div style="position:absolute;left:944px;top:277px;width:1px;height:19px;background:#a0a0a0"></div>
<div style="position:absolute;left:1042px;top:277px;width:1px;height:19px;background:#a0a0a0"></div>
<div style="position:absolute;left:1146px;top:277px;width:1px;height:19px;background:#a0a0a0"></div>
<div style="position:absolute;left:1213px;top:277px;width:1px;height:19px;background:#a0a0a0"></div>
<div style="position:absolute;left:1299px;top:277px;width:1px;height:19px;background:#a0a0a0"></div>
<div style="position:absolute;left:1459px;top:277px;width:1px;height:19px;background:#a0a0a0"></div>
<div style="position:absolute;left:463px;top:276px;line-height:20px;white-space:nowrap;color:#000">Standard</div>
<div style="position:absolute;left:566px;width:64px;top:276px;line-height:20px;white-space:nowrap;text-align:center;color:#000">ha</div>
<div style="position:absolute;right:580px;top:276px;line-height:20px;white-space:nowrap;color:#000">2,7200</div>
<div style="position:absolute;right:522px;top:276px;line-height:20px;white-space:nowrap;color:#000">19,00 %</div>
<div style="position:absolute;right:424px;top:276px;line-height:20px;white-space:nowrap;color:#000">5,0000</div>
<div style="position:absolute;left:442px;top:297px;width:11px;height:19px;background:#f0f0f0;border-left:1px solid #fff;border-top:1px solid #fff;box-sizing:border-box"></div>
<div style="position:absolute;left:567px;top:297px;width:63px;height:19px;background:#ffffcc"></div>
<div style="position:absolute;left:442px;top:316px;width:1022px;height:1px;background:#a0a0a0"></div>
<div style="position:absolute;left:441px;top:296px;width:1px;height:21px;background:#a0a0a0"></div>
<div style="position:absolute;left:453px;top:297px;width:1px;height:19px;background:#a0a0a0"></div>
<div style="position:absolute;left:459px;top:297px;width:1px;height:19px;background:#a0a0a0"></div>
<div style="position:absolute;left:566px;top:297px;width:1px;height:19px;background:#a0a0a0"></div>
<div style="position:absolute;left:630px;top:297px;width:1px;height:19px;background:#a0a0a0"></div>
<div style="position:absolute;left:730px;top:297px;width:1px;height:19px;background:#a0a0a0"></div>
<div style="position:absolute;left:788px;top:297px;width:1px;height:19px;background:#a0a0a0"></div>
<div style="position:absolute;left:886px;top:297px;width:1px;height:19px;background:#a0a0a0"></div>
<div style="position:absolute;left:944px;top:297px;width:1px;height:19px;background:#a0a0a0"></div>
<div style="position:absolute;left:1042px;top:297px;width:1px;height:19px;background:#a0a0a0"></div>
<div style="position:absolute;left:1146px;top:297px;width:1px;height:19px;background:#a0a0a0"></div>
<div style="position:absolute;left:1213px;top:297px;width:1px;height:19px;background:#a0a0a0"></div>
<div style="position:absolute;left:1299px;top:297px;width:1px;height:19px;background:#a0a0a0"></div>
<div style="position:absolute;left:1459px;top:297px;width:1px;height:19px;background:#a0a0a0"></div>
<div style="position:absolute;left:463px;top:296px;line-height:20px;white-space:nowrap;color:#000">Standard</div>
<div style="position:absolute;left:566px;width:64px;top:296px;line-height:20px;white-space:nowrap;text-align:center;color:#000">ha</div>
<div style="position:absolute;right:580px;top:296px;line-height:20px;white-space:nowrap;color:#000">9,4200</div>
<div style="position:absolute;right:522px;top:296px;line-height:20px;white-space:nowrap;color:#000">19,00 %</div>
<div style="position:absolute;right:424px;top:296px;line-height:20px;white-space:nowrap;color:#000">15,0000</div>
<div style="position:absolute;left:442px;top:317px;width:11px;height:19px;background:#f0f0f0;border-left:1px solid #fff;border-top:1px solid #fff;box-sizing:border-box"></div>
<div style="position:absolute;left:567px;top:317px;width:63px;height:19px;background:#ffffcc"></div>
<div style="position:absolute;left:442px;top:336px;width:1022px;height:1px;background:#a0a0a0"></div>
<div style="position:absolute;left:441px;top:316px;width:1px;height:21px;background:#a0a0a0"></div>
<div style="position:absolute;left:453px;top:317px;width:1px;height:19px;background:#a0a0a0"></div>
<div style="position:absolute;left:459px;top:317px;width:1px;height:19px;background:#a0a0a0"></div>
<div style="position:absolute;left:566px;top:317px;width:1px;height:19px;background:#a0a0a0"></div>
<div style="position:absolute;left:630px;top:317px;width:1px;height:19px;background:#a0a0a0"></div>
<div style="position:absolute;left:730px;top:317px;width:1px;height:19px;background:#a0a0a0"></div>
<div style="position:absolute;left:788px;top:317px;width:1px;height:19px;background:#a0a0a0"></div>
<div style="position:absolute;left:886px;top:317px;width:1px;height:19px;background:#a0a0a0"></div>
<div style="position:absolute;left:944px;top:317px;width:1px;height:19px;background:#a0a0a0"></div>
<div style="position:absolute;left:1042px;top:317px;width:1px;height:19px;background:#a0a0a0"></div>
<div style="position:absolute;left:1146px;top:317px;width:1px;height:19px;background:#a0a0a0"></div>
<div style="position:absolute;left:1213px;top:317px;width:1px;height:19px;background:#a0a0a0"></div>
<div style="position:absolute;left:1299px;top:317px;width:1px;height:19px;background:#a0a0a0"></div>
<div style="position:absolute;left:1459px;top:317px;width:1px;height:19px;background:#a0a0a0"></div>
<div style="position:absolute;left:463px;top:316px;line-height:20px;white-space:nowrap;color:#000">Standard</div>
<div style="position:absolute;left:566px;width:64px;top:316px;line-height:20px;white-space:nowrap;text-align:center;color:#000">ha</div>
<div style="position:absolute;right:580px;top:316px;line-height:20px;white-space:nowrap;color:#000">0,2500</div>
<div style="position:absolute;right:522px;top:316px;line-height:20px;white-space:nowrap;color:#000">19,00 %</div>
<div style="position:absolute;left:442px;top:337px;width:11px;height:19px;background:#f0f0f0;border-left:1px solid #fff;border-top:1px solid #fff;box-sizing:border-box"></div>
<div style="position:absolute;left:567px;top:337px;width:63px;height:19px;background:#ffffcc"></div>
<div style="position:absolute;left:442px;top:356px;width:1022px;height:1px;background:#a0a0a0"></div>
<div style="position:absolute;left:441px;top:336px;width:1px;height:21px;background:#a0a0a0"></div>
<div style="position:absolute;left:453px;top:337px;width:1px;height:19px;background:#a0a0a0"></div>
<div style="position:absolute;left:459px;top:337px;width:1px;height:19px;background:#a0a0a0"></div>
<div style="position:absolute;left:566px;top:337px;width:1px;height:19px;background:#a0a0a0"></div>
<div style="position:absolute;left:630px;top:337px;width:1px;height:19px;background:#a0a0a0"></div>
<div style="position:absolute;left:730px;top:337px;width:1px;height:19px;background:#a0a0a0"></div>
<div style="position:absolute;left:788px;top:337px;width:1px;height:19px;background:#a0a0a0"></div>
<div style="position:absolute;left:886px;top:337px;width:1px;height:19px;background:#a0a0a0"></div>
<div style="position:absolute;left:944px;top:337px;width:1px;height:19px;background:#a0a0a0"></div>
<div style="position:absolute;left:1042px;top:337px;width:1px;height:19px;background:#a0a0a0"></div>
<div style="position:absolute;left:1146px;top:337px;width:1px;height:19px;background:#a0a0a0"></div>
<div style="position:absolute;left:1213px;top:337px;width:1px;height:19px;background:#a0a0a0"></div>
<div style="position:absolute;left:1299px;top:337px;width:1px;height:19px;background:#a0a0a0"></div>
<div style="position:absolute;left:1459px;top:337px;width:1px;height:19px;background:#a0a0a0"></div>
<div style="position:absolute;left:463px;top:336px;line-height:20px;white-space:nowrap;color:#000">Standard</div>
<div style="position:absolute;left:566px;width:64px;top:336px;line-height:20px;white-space:nowrap;text-align:center;color:#000">ha</div>
<div style="position:absolute;right:580px;top:336px;line-height:20px;white-space:nowrap;color:#000">1,0000</div>
<div style="position:absolute;right:522px;top:336px;line-height:20px;white-space:nowrap;color:#000">19,00 %</div>
<div style="position:absolute;left:442px;top:357px;width:11px;height:19px;background:#f0f0f0;border-left:1px solid #fff;border-top:1px solid #fff;box-sizing:border-box"></div>
<div style="position:absolute;left:567px;top:357px;width:63px;height:19px;background:#ffffcc"></div>
<div style="position:absolute;left:631px;top:357px;width:99px;height:19px;background:#ffffcc"></div>
<div style="position:absolute;left:442px;top:376px;width:1022px;height:1px;background:#a0a0a0"></div>
<div style="position:absolute;left:441px;top:356px;width:1px;height:21px;background:#a0a0a0"></div>
<div style="position:absolute;left:453px;top:357px;width:1px;height:19px;background:#a0a0a0"></div>
<div style="position:absolute;left:459px;top:357px;width:1px;height:19px;background:#a0a0a0"></div>
<div style="position:absolute;left:566px;top:357px;width:1px;height:19px;background:#a0a0a0"></div>
<div style="position:absolute;left:630px;top:357px;width:1px;height:19px;background:#a0a0a0"></div>
<div style="position:absolute;left:730px;top:357px;width:1px;height:19px;background:#a0a0a0"></div>
<div style="position:absolute;left:788px;top:357px;width:1px;height:19px;background:#a0a0a0"></div>
<div style="position:absolute;left:886px;top:357px;width:1px;height:19px;background:#a0a0a0"></div>
<div style="position:absolute;left:944px;top:357px;width:1px;height:19px;background:#a0a0a0"></div>
<div style="position:absolute;left:1042px;top:357px;width:1px;height:19px;background:#a0a0a0"></div>
<div style="position:absolute;left:1146px;top:357px;width:1px;height:19px;background:#a0a0a0"></div>
<div style="position:absolute;left:1213px;top:357px;width:1px;height:19px;background:#a0a0a0"></div>
<div style="position:absolute;left:1299px;top:357px;width:1px;height:19px;background:#a0a0a0"></div>
<div style="position:absolute;left:1459px;top:357px;width:1px;height:19px;background:#a0a0a0"></div>
<div style="position:absolute;left:463px;top:356px;line-height:20px;white-space:nowrap;color:#000">Standard</div>
<div style="position:absolute;left:566px;width:64px;top:356px;line-height:20px;white-space:nowrap;text-align:center;color:#000">Std</div>
<div style="position:absolute;right:580px;top:356px;line-height:20px;white-space:nowrap;color:#000">15,0000</div>
<div style="position:absolute;right:522px;top:356px;line-height:20px;white-space:nowrap;color:#000">19,00 %</div>
<div style="position:absolute;right:424px;top:356px;line-height:20px;white-space:nowrap;color:#000">28,0000</div>
<div style="position:absolute;left:442px;top:377px;width:11px;height:19px;background:#f0f0f0;border-left:1px solid #fff;border-top:1px solid #fff;box-sizing:border-box"></div>
<div style="position:absolute;left:567px;top:377px;width:63px;height:19px;background:#ffffcc"></div>
<div style="position:absolute;left:631px;top:377px;width:99px;height:19px;background:#ffffcc"></div>
<div style="position:absolute;left:442px;top:396px;width:1022px;height:1px;background:#a0a0a0"></div>
<div style="position:absolute;left:441px;top:376px;width:1px;height:21px;background:#a0a0a0"></div>
<div style="position:absolute;left:453px;top:377px;width:1px;height:19px;background:#a0a0a0"></div>
<div style="position:absolute;left:459px;top:377px;width:1px;height:19px;background:#a0a0a0"></div>
<div style="position:absolute;left:566px;top:377px;width:1px;height:19px;background:#a0a0a0"></div>
<div style="position:absolute;left:630px;top:377px;width:1px;height:19px;background:#a0a0a0"></div>
<div style="position:absolute;left:730px;top:377px;width:1px;height:19px;background:#a0a0a0"></div>
<div style="position:absolute;left:788px;top:377px;width:1px;height:19px;background:#a0a0a0"></div>
<div style="position:absolute;left:886px;top:377px;width:1px;height:19px;background:#a0a0a0"></div>
<div style="position:absolute;left:944px;top:377px;width:1px;height:19px;background:#a0a0a0"></div>
<div style="position:absolute;left:1042px;top:377px;width:1px;height:19px;background:#a0a0a0"></div>
<div style="position:absolute;left:1146px;top:377px;width:1px;height:19px;background:#a0a0a0"></div>
<div style="position:absolute;left:1213px;top:377px;width:1px;height:19px;background:#a0a0a0"></div>
<div style="position:absolute;left:1299px;top:377px;width:1px;height:19px;background:#a0a0a0"></div>
<div style="position:absolute;left:1459px;top:377px;width:1px;height:19px;background:#a0a0a0"></div>
<div style="position:absolute;left:463px;top:376px;line-height:20px;white-space:nowrap;color:#000">Standard</div>
<div style="position:absolute;left:566px;width:64px;top:376px;line-height:20px;white-space:nowrap;text-align:center;color:#000">Std</div>
<div style="position:absolute;left:442px;top:397px;width:11px;height:19px;background:#f0f0f0;border-left:1px solid #fff;border-top:1px solid #fff;box-sizing:border-box"></div>
<div style="position:absolute;left:567px;top:397px;width:63px;height:19px;background:#ffffcc"></div>
<div style="position:absolute;left:631px;top:397px;width:99px;height:19px;background:#ffffcc"></div>
<div style="position:absolute;left:442px;top:416px;width:1022px;height:1px;background:#a0a0a0"></div>
<div style="position:absolute;left:441px;top:396px;width:1px;height:21px;background:#a0a0a0"></div>
<div style="position:absolute;left:453px;top:397px;width:1px;height:19px;background:#a0a0a0"></div>
<div style="position:absolute;left:459px;top:397px;width:1px;height:19px;background:#a0a0a0"></div>
<div style="position:absolute;left:566px;top:397px;width:1px;height:19px;background:#a0a0a0"></div>
<div style="position:absolute;left:630px;top:397px;width:1px;height:19px;background:#a0a0a0"></div>
<div style="position:absolute;left:730px;top:397px;width:1px;height:19px;background:#a0a0a0"></div>
<div style="position:absolute;left:788px;top:397px;width:1px;height:19px;background:#a0a0a0"></div>
<div style="position:absolute;left:886px;top:397px;width:1px;height:19px;background:#a0a0a0"></div>
<div style="position:absolute;left:944px;top:397px;width:1px;height:19px;background:#a0a0a0"></div>
<div style="position:absolute;left:1042px;top:397px;width:1px;height:19px;background:#a0a0a0"></div>
<div style="position:absolute;left:1146px;top:397px;width:1px;height:19px;background:#a0a0a0"></div>
<div style="position:absolute;left:1213px;top:397px;width:1px;height:19px;background:#a0a0a0"></div>
<div style="position:absolute;left:1299px;top:397px;width:1px;height:19px;background:#a0a0a0"></div>
<div style="position:absolute;left:1459px;top:397px;width:1px;height:19px;background:#a0a0a0"></div>
<div style="position:absolute;left:463px;top:396px;line-height:20px;white-space:nowrap;color:#000">Standard</div>
<div style="position:absolute;left:566px;width:64px;top:396px;line-height:20px;white-space:nowrap;text-align:center;color:#000">Std</div>
<div style="position:absolute;left:442px;top:417px;width:11px;height:19px;background:#f0f0f0;border-left:1px solid #fff;border-top:1px solid #fff;box-sizing:border-box"></div>
<div style="position:absolute;left:442px;top:436px;width:1022px;height:1px;background:#a0a0a0"></div>
<div style="position:absolute;left:441px;top:416px;width:1px;height:21px;background:#a0a0a0"></div>
<div style="position:absolute;left:453px;top:417px;width:1px;height:19px;background:#a0a0a0"></div>
<div style="position:absolute;left:459px;top:417px;width:1px;height:19px;background:#a0a0a0"></div>
<div style="position:absolute;left:566px;top:417px;width:1px;height:19px;background:#a0a0a0"></div>
<div style="position:absolute;left:630px;top:417px;width:1px;height:19px;background:#a0a0a0"></div>
<div style="position:absolute;left:730px;top:417px;width:1px;height:19px;background:#a0a0a0"></div>
<div style="position:absolute;left:788px;top:417px;width:1px;height:19px;background:#a0a0a0"></div>
<div style="position:absolute;left:886px;top:417px;width:1px;height:19px;background:#a0a0a0"></div>
<div style="position:absolute;left:944px;top:417px;width:1px;height:19px;background:#a0a0a0"></div>
<div style="position:absolute;left:1042px;top:417px;width:1px;height:19px;background:#a0a0a0"></div>
<div style="position:absolute;left:1146px;top:417px;width:1px;height:19px;background:#a0a0a0"></div>
<div style="position:absolute;left:1213px;top:417px;width:1px;height:19px;background:#a0a0a0"></div>
<div style="position:absolute;left:1299px;top:417px;width:1px;height:19px;background:#a0a0a0"></div>
<div style="position:absolute;left:1459px;top:417px;width:1px;height:19px;background:#a0a0a0"></div>
<div style="position:absolute;left:463px;top:416px;line-height:20px;white-space:nowrap;color:#000">Normal</div>
<div style="position:absolute;left:566px;width:64px;top:416px;line-height:20px;white-space:nowrap;text-align:center;color:#000">ha</div>
<div style="position:absolute;right:580px;top:416px;line-height:20px;white-space:nowrap;color:#000">13,9300</div>
<div style="position:absolute;left:442px;top:437px;width:11px;height:19px;background:#f0f0f0;border-left:1px solid #fff;border-top:1px solid #fff;box-sizing:border-box"></div>
<div style="position:absolute;left:442px;top:456px;width:1022px;height:1px;background:#a0a0a0"></div>
<div style="position:absolute;left:441px;top:436px;width:1px;height:21px;background:#a0a0a0"></div>
<div style="position:absolute;left:453px;top:437px;width:1px;height:19px;background:#a0a0a0"></div>
<div style="position:absolute;left:459px;top:437px;width:1px;height:19px;background:#a0a0a0"></div>
<div style="position:absolute;left:566px;top:437px;width:1px;height:19px;background:#a0a0a0"></div>
<div style="position:absolute;left:630px;top:437px;width:1px;height:19px;background:#a0a0a0"></div>
<div style="position:absolute;left:730px;top:437px;width:1px;height:19px;background:#a0a0a0"></div>
<div style="position:absolute;left:788px;top:437px;width:1px;height:19px;background:#a0a0a0"></div>
<div style="position:absolute;left:886px;top:437px;width:1px;height:19px;background:#a0a0a0"></div>
<div style="position:absolute;left:944px;top:437px;width:1px;height:19px;background:#a0a0a0"></div>
<div style="position:absolute;left:1042px;top:437px;width:1px;height:19px;background:#a0a0a0"></div>
<div style="position:absolute;left:1146px;top:437px;width:1px;height:19px;background:#a0a0a0"></div>
<div style="position:absolute;left:1213px;top:437px;width:1px;height:19px;background:#a0a0a0"></div>
<div style="position:absolute;left:1299px;top:437px;width:1px;height:19px;background:#a0a0a0"></div>
<div style="position:absolute;left:1459px;top:437px;width:1px;height:19px;background:#a0a0a0"></div>
<div style="position:absolute;left:463px;top:436px;line-height:20px;white-space:nowrap;color:#000">Standard</div>
<div style="position:absolute;left:566px;width:64px;top:436px;line-height:20px;white-space:nowrap;text-align:center;color:#000">ha</div>
<div style="position:absolute;right:580px;top:436px;line-height:20px;white-space:nowrap;color:#000">1,0000</div>
<div style="position:absolute;left:442px;top:457px;width:11px;height:19px;background:#f0f0f0;border-left:1px solid #fff;border-top:1px solid #fff;box-sizing:border-box"></div>
<div style="position:absolute;left:442px;top:476px;width:1022px;height:1px;background:#a0a0a0"></div>
<div style="position:absolute;left:441px;top:456px;width:1px;height:21px;background:#a0a0a0"></div>
<div style="position:absolute;left:453px;top:457px;width:1px;height:19px;background:#a0a0a0"></div>
<div style="position:absolute;left:459px;top:457px;width:1px;height:19px;background:#a0a0a0"></div>
<div style="position:absolute;left:566px;top:457px;width:1px;height:19px;background:#a0a0a0"></div>
<div style="position:absolute;left:630px;top:457px;width:1px;height:19px;background:#a0a0a0"></div>
<div style="position:absolute;left:730px;top:457px;width:1px;height:19px;background:#a0a0a0"></div>
<div style="position:absolute;left:788px;top:457px;width:1px;height:19px;background:#a0a0a0"></div>
<div style="position:absolute;left:886px;top:457px;width:1px;height:19px;background:#a0a0a0"></div>
<div style="position:absolute;left:944px;top:457px;width:1px;height:19px;background:#a0a0a0"></div>
<div style="position:absolute;left:1042px;top:457px;width:1px;height:19px;background:#a0a0a0"></div>
<div style="position:absolute;left:1146px;top:457px;width:1px;height:19px;background:#a0a0a0"></div>
<div style="position:absolute;left:1213px;top:457px;width:1px;height:19px;background:#a0a0a0"></div>
<div style="position:absolute;left:1299px;top:457px;width:1px;height:19px;background:#a0a0a0"></div>
<div style="position:absolute;left:1459px;top:457px;width:1px;height:19px;background:#a0a0a0"></div>
<div style="position:absolute;left:463px;top:456px;line-height:20px;white-space:nowrap;color:#000">Standard</div>
<div style="position:absolute;left:566px;width:64px;top:456px;line-height:20px;white-space:nowrap;text-align:center;color:#000">ha</div>
<div style="position:absolute;right:580px;top:456px;line-height:20px;white-space:nowrap;color:#000">1,0000</div>
<div style="position:absolute;left:442px;top:477px;width:11px;height:19px;background:#f0f0f0;border-left:1px solid #fff;border-top:1px solid #fff;box-sizing:border-box"></div>
<div style="position:absolute;left:442px;top:496px;width:1022px;height:1px;background:#a0a0a0"></div>
<div style="position:absolute;left:441px;top:476px;width:1px;height:21px;background:#a0a0a0"></div>
<div style="position:absolute;left:453px;top:477px;width:1px;height:19px;background:#a0a0a0"></div>
<div style="position:absolute;left:459px;top:477px;width:1px;height:19px;background:#a0a0a0"></div>
<div style="position:absolute;left:566px;top:477px;width:1px;height:19px;background:#a0a0a0"></div>
<div style="position:absolute;left:630px;top:477px;width:1px;height:19px;background:#a0a0a0"></div>
<div style="position:absolute;left:730px;top:477px;width:1px;height:19px;background:#a0a0a0"></div>
<div style="position:absolute;left:788px;top:477px;width:1px;height:19px;background:#a0a0a0"></div>
<div style="position:absolute;left:886px;top:477px;width:1px;height:19px;background:#a0a0a0"></div>
<div style="position:absolute;left:944px;top:477px;width:1px;height:19px;background:#a0a0a0"></div>
<div style="position:absolute;left:1042px;top:477px;width:1px;height:19px;background:#a0a0a0"></div>
<div style="position:absolute;left:1146px;top:477px;width:1px;height:19px;background:#a0a0a0"></div>
<div style="position:absolute;left:1213px;top:477px;width:1px;height:19px;background:#a0a0a0"></div>
<div style="position:absolute;left:1299px;top:477px;width:1px;height:19px;background:#a0a0a0"></div>
<div style="position:absolute;left:1459px;top:477px;width:1px;height:19px;background:#a0a0a0"></div>
<div style="position:absolute;left:463px;top:476px;line-height:20px;white-space:nowrap;color:#000">Standard</div>
<div style="position:absolute;left:566px;width:64px;top:476px;line-height:20px;white-space:nowrap;text-align:center;color:#000">ha</div>
<div style="position:absolute;right:580px;top:476px;line-height:20px;white-space:nowrap;color:#000">1,0000</div>
<div style="position:absolute;left:442px;top:497px;width:11px;height:19px;background:#f0f0f0;border-left:1px solid #fff;border-top:1px solid #fff;box-sizing:border-box"></div>
<div style="position:absolute;left:631px;top:497px;width:99px;height:19px;background:#ffffcc"></div>
<div style="position:absolute;left:442px;top:516px;width:1022px;height:1px;background:#a0a0a0"></div>
<div style="position:absolute;left:441px;top:496px;width:1px;height:21px;background:#a0a0a0"></div>
<div style="position:absolute;left:453px;top:497px;width:1px;height:19px;background:#a0a0a0"></div>
<div style="position:absolute;left:459px;top:497px;width:1px;height:19px;background:#a0a0a0"></div>
<div style="position:absolute;left:566px;top:497px;width:1px;height:19px;background:#a0a0a0"></div>
<div style="position:absolute;left:630px;top:497px;width:1px;height:19px;background:#a0a0a0"></div>
<div style="position:absolute;left:730px;top:497px;width:1px;height:19px;background:#a0a0a0"></div>
<div style="position:absolute;left:788px;top:497px;width:1px;height:19px;background:#a0a0a0"></div>
<div style="position:absolute;left:886px;top:497px;width:1px;height:19px;background:#a0a0a0"></div>
<div style="position:absolute;left:944px;top:497px;width:1px;height:19px;background:#a0a0a0"></div>
<div style="position:absolute;left:1042px;top:497px;width:1px;height:19px;background:#a0a0a0"></div>
<div style="position:absolute;left:1146px;top:497px;width:1px;height:19px;background:#a0a0a0"></div>
<div style="position:absolute;left:1213px;top:497px;width:1px;height:19px;background:#a0a0a0"></div>
<div style="position:absolute;left:1299px;top:497px;width:1px;height:19px;background:#a0a0a0"></div>
<div style="position:absolute;left:1459px;top:497px;width:1px;height:19px;background:#a0a0a0"></div>
<div style="position:absolute;left:463px;top:496px;line-height:20px;white-space:nowrap;color:#000">Standard</div>
<div style="position:absolute;left:566px;width:64px;top:496px;line-height:20px;white-space:nowrap;text-align:center;color:#000">Std</div>
<div style="position:absolute;left:442px;top:517px;width:11px;height:19px;background:#f0f0f0;border-left:1px solid #fff;border-top:1px solid #fff;box-sizing:border-box"></div>
<div style="position:absolute;left:631px;top:517px;width:99px;height:19px;background:#ffffcc"></div>
<div style="position:absolute;left:442px;top:536px;width:1022px;height:1px;background:#a0a0a0"></div>
<div style="position:absolute;left:441px;top:516px;width:1px;height:21px;background:#a0a0a0"></div>
<div style="position:absolute;left:453px;top:517px;width:1px;height:19px;background:#a0a0a0"></div>
<div style="position:absolute;left:459px;top:517px;width:1px;height:19px;background:#a0a0a0"></div>
<div style="position:absolute;left:566px;top:517px;width:1px;height:19px;background:#a0a0a0"></div>
<div style="position:absolute;left:630px;top:517px;width:1px;height:19px;background:#a0a0a0"></div>
<div style="position:absolute;left:730px;top:517px;width:1px;height:19px;background:#a0a0a0"></div>
<div style="position:absolute;left:788px;top:517px;width:1px;height:19px;background:#a0a0a0"></div>
<div style="position:absolute;left:886px;top:517px;width:1px;height:19px;background:#a0a0a0"></div>
<div style="position:absolute;left:944px;top:517px;width:1px;height:19px;background:#a0a0a0"></div>
<div style="position:absolute;left:1042px;top:517px;width:1px;height:19px;background:#a0a0a0"></div>
<div style="position:absolute;left:1146px;top:517px;width:1px;height:19px;background:#a0a0a0"></div>
<div style="position:absolute;left:1213px;top:517px;width:1px;height:19px;background:#a0a0a0"></div>
<div style="position:absolute;left:1299px;top:517px;width:1px;height:19px;background:#a0a0a0"></div>
<div style="position:absolute;left:1459px;top:517px;width:1px;height:19px;background:#a0a0a0"></div>
<div style="position:absolute;left:463px;top:516px;line-height:20px;white-space:nowrap;color:#000">Standard</div>
<div style="position:absolute;left:566px;width:64px;top:516px;line-height:20px;white-space:nowrap;text-align:center;color:#000">Std</div>
<div style="position:absolute;left:442px;top:537px;width:11px;height:19px;background:#f0f0f0;border-left:1px solid #fff;border-top:1px solid #fff;box-sizing:border-box"></div>
<div style="position:absolute;left:442px;top:556px;width:1022px;height:1px;background:#a0a0a0"></div>
<div style="position:absolute;left:441px;top:536px;width:1px;height:21px;background:#a0a0a0"></div>
<div style="position:absolute;left:453px;top:537px;width:1px;height:19px;background:#a0a0a0"></div>
<div style="position:absolute;left:459px;top:537px;width:1px;height:19px;background:#a0a0a0"></div>
<div style="position:absolute;left:566px;top:537px;width:1px;height:19px;background:#a0a0a0"></div>
<div style="position:absolute;left:630px;top:537px;width:1px;height:19px;background:#a0a0a0"></div>
<div style="position:absolute;left:730px;top:537px;width:1px;height:19px;background:#a0a0a0"></div>
<div style="position:absolute;left:788px;top:537px;width:1px;height:19px;background:#a0a0a0"></div>
<div style="position:absolute;left:886px;top:537px;width:1px;height:19px;background:#a0a0a0"></div>
<div style="position:absolute;left:944px;top:537px;width:1px;height:19px;background:#a0a0a0"></div>
<div style="position:absolute;left:1042px;top:537px;width:1px;height:19px;background:#a0a0a0"></div>
<div style="position:absolute;left:1146px;top:537px;width:1px;height:19px;background:#a0a0a0"></div>
<div style="position:absolute;left:1213px;top:537px;width:1px;height:19px;background:#a0a0a0"></div>
<div style="position:absolute;left:1299px;top:537px;width:1px;height:19px;background:#a0a0a0"></div>
<div style="position:absolute;left:1459px;top:537px;width:1px;height:19px;background:#a0a0a0"></div>
<div style="position:absolute;left:463px;top:536px;line-height:20px;white-space:nowrap;color:#000">Standard</div>
<div style="position:absolute;left:566px;width:64px;top:536px;line-height:20px;white-space:nowrap;text-align:center;color:#000">ha</div>
<div style="position:absolute;right:580px;top:536px;line-height:20px;white-space:nowrap;color:#000">28,1300</div>
<div style="position:absolute;left:442px;top:557px;width:11px;height:19px;background:#f0f0f0;border-left:1px solid #fff;border-top:1px solid #fff;box-sizing:border-box"></div>
<div style="position:absolute;left:631px;top:557px;width:99px;height:19px;background:#ffffcc"></div>
<div style="position:absolute;left:442px;top:576px;width:1022px;height:1px;background:#a0a0a0"></div>
<div style="position:absolute;left:441px;top:556px;width:1px;height:21px;background:#a0a0a0"></div>
<div style="position:absolute;left:453px;top:557px;width:1px;height:19px;background:#a0a0a0"></div>
<div style="position:absolute;left:459px;top:557px;width:1px;height:19px;background:#a0a0a0"></div>
<div style="position:absolute;left:566px;top:557px;width:1px;height:19px;background:#a0a0a0"></div>
<div style="position:absolute;left:630px;top:557px;width:1px;height:19px;background:#a0a0a0"></div>
<div style="position:absolute;left:730px;top:557px;width:1px;height:19px;background:#a0a0a0"></div>
<div style="position:absolute;left:788px;top:557px;width:1px;height:19px;background:#a0a0a0"></div>
<div style="position:absolute;left:886px;top:557px;width:1px;height:19px;background:#a0a0a0"></div>
<div style="position:absolute;left:944px;top:557px;width:1px;height:19px;background:#a0a0a0"></div>
<div style="position:absolute;left:1042px;top:557px;width:1px;height:19px;background:#a0a0a0"></div>
<div style="position:absolute;left:1146px;top:557px;width:1px;height:19px;background:#a0a0a0"></div>
<div style="position:absolute;left:1213px;top:557px;width:1px;height:19px;background:#a0a0a0"></div>
<div style="position:absolute;left:1299px;top:557px;width:1px;height:19px;background:#a0a0a0"></div>
<div style="position:absolute;left:1459px;top:557px;width:1px;height:19px;background:#a0a0a0"></div>
<div style="position:absolute;left:463px;top:556px;line-height:20px;white-space:nowrap;color:#000">Standard</div>
<div style="position:absolute;left:566px;width:64px;top:556px;line-height:20px;white-space:nowrap;text-align:center;color:#000">Std</div>
<div style="position:absolute;left:442px;top:577px;width:11px;height:19px;background:#f0f0f0;border-left:1px solid #fff;border-top:1px solid #fff;box-sizing:border-box"></div>
<div style="position:absolute;left:567px;top:577px;width:63px;height:19px;background:#ffffcc"></div>
<div style="position:absolute;left:442px;top:596px;width:1022px;height:1px;background:#a0a0a0"></div>
<div style="position:absolute;left:441px;top:576px;width:1px;height:21px;background:#a0a0a0"></div>
<div style="position:absolute;left:453px;top:577px;width:1px;height:19px;background:#a0a0a0"></div>
<div style="position:absolute;left:459px;top:577px;width:1px;height:19px;background:#a0a0a0"></div>
<div style="position:absolute;left:566px;top:577px;width:1px;height:19px;background:#a0a0a0"></div>
<div style="position:absolute;left:630px;top:577px;width:1px;height:19px;background:#a0a0a0"></div>
<div style="position:absolute;left:730px;top:577px;width:1px;height:19px;background:#a0a0a0"></div>
<div style="position:absolute;left:788px;top:577px;width:1px;height:19px;background:#a0a0a0"></div>
<div style="position:absolute;left:886px;top:577px;width:1px;height:19px;background:#a0a0a0"></div>
<div style="position:absolute;left:944px;top:577px;width:1px;height:19px;background:#a0a0a0"></div>
<div style="position:absolute;left:1042px;top:577px;width:1px;height:19px;background:#a0a0a0"></div>
<div style="position:absolute;left:1146px;top:577px;width:1px;height:19px;background:#a0a0a0"></div>
<div style="position:absolute;left:1213px;top:577px;width:1px;height:19px;background:#a0a0a0"></div>
<div style="position:absolute;left:1299px;top:577px;width:1px;height:19px;background:#a0a0a0"></div>
<div style="position:absolute;left:1459px;top:577px;width:1px;height:19px;background:#a0a0a0"></div>
<div style="position:absolute;left:463px;top:576px;line-height:20px;white-space:nowrap;color:#000">Standard</div>
<div style="position:absolute;left:566px;width:64px;top:576px;line-height:20px;white-space:nowrap;text-align:center;color:#000">ha</div>
<div style="position:absolute;left:442px;top:597px;width:11px;height:19px;background:#f0f0f0;border-left:1px solid #fff;border-top:1px solid #fff;box-sizing:border-box"></div>
<div style="position:absolute;left:631px;top:597px;width:99px;height:19px;background:#ffffcc"></div>
<div style="position:absolute;left:442px;top:616px;width:1022px;height:1px;background:#a0a0a0"></div>
<div style="position:absolute;left:441px;top:596px;width:1px;height:21px;background:#a0a0a0"></div>
<div style="position:absolute;left:453px;top:597px;width:1px;height:19px;background:#a0a0a0"></div>
<div style="position:absolute;left:459px;top:597px;width:1px;height:19px;background:#a0a0a0"></div>
<div style="position:absolute;left:566px;top:597px;width:1px;height:19px;background:#a0a0a0"></div>
<div style="position:absolute;left:630px;top:597px;width:1px;height:19px;background:#a0a0a0"></div>
<div style="position:absolute;left:730px;top:597px;width:1px;height:19px;background:#a0a0a0"></div>
<div style="position:absolute;left:788px;top:597px;width:1px;height:19px;background:#a0a0a0"></div>
<div style="position:absolute;left:886px;top:597px;width:1px;height:19px;background:#a0a0a0"></div>
<div style="position:absolute;left:944px;top:597px;width:1px;height:19px;background:#a0a0a0"></div>
<div style="position:absolute;left:1042px;top:597px;width:1px;height:19px;background:#a0a0a0"></div>
<div style="position:absolute;left:1146px;top:597px;width:1px;height:19px;background:#a0a0a0"></div>
<div style="position:absolute;left:1213px;top:597px;width:1px;height:19px;background:#a0a0a0"></div>
<div style="position:absolute;left:1299px;top:597px;width:1px;height:19px;background:#a0a0a0"></div>
<div style="position:absolute;left:1459px;top:597px;width:1px;height:19px;background:#a0a0a0"></div>
<div style="position:absolute;left:463px;top:596px;line-height:20px;white-space:nowrap;color:#000">Standard</div>
<div style="position:absolute;left:566px;width:64px;top:596px;line-height:20px;white-space:nowrap;text-align:center;color:#000">Std</div>
<div style="position:absolute;left:442px;top:617px;width:11px;height:19px;background:#f0f0f0;border-left:1px solid #fff;border-top:1px solid #fff;box-sizing:border-box"></div>
<div style="position:absolute;left:442px;top:636px;width:1022px;height:1px;background:#a0a0a0"></div>
<div style="position:absolute;left:441px;top:616px;width:1px;height:21px;background:#a0a0a0"></div>
<div style="position:absolute;left:453px;top:617px;width:1px;height:19px;background:#a0a0a0"></div>
<div style="position:absolute;left:459px;top:617px;width:1px;height:19px;background:#a0a0a0"></div>
<div style="position:absolute;left:566px;top:617px;width:1px;height:19px;background:#a0a0a0"></div>
<div style="position:absolute;left:630px;top:617px;width:1px;height:19px;background:#a0a0a0"></div>
<div style="position:absolute;left:730px;top:617px;width:1px;height:19px;background:#a0a0a0"></div>
<div style="position:absolute;left:788px;top:617px;width:1px;height:19px;background:#a0a0a0"></div>
<div style="position:absolute;left:886px;top:617px;width:1px;height:19px;background:#a0a0a0"></div>
<div style="position:absolute;left:944px;top:617px;width:1px;height:19px;background:#a0a0a0"></div>
<div style="position:absolute;left:1042px;top:617px;width:1px;height:19px;background:#a0a0a0"></div>
<div style="position:absolute;left:1146px;top:617px;width:1px;height:19px;background:#a0a0a0"></div>
<div style="position:absolute;left:1213px;top:617px;width:1px;height:19px;background:#a0a0a0"></div>
<div style="position:absolute;left:1299px;top:617px;width:1px;height:19px;background:#a0a0a0"></div>
<div style="position:absolute;left:1459px;top:617px;width:1px;height:19px;background:#a0a0a0"></div>
<div style="position:absolute;left:463px;top:616px;line-height:20px;white-space:nowrap;color:#000">Standard</div>
<div style="position:absolute;left:566px;width:64px;top:616px;line-height:20px;white-space:nowrap;text-align:center;color:#000">ha</div>
<div style="position:absolute;left:441px;top:48px;width:1023px;height:27px;background:#f0f0f0"></div>
<div style="position:absolute;left:441px;top:48px;width:1023px;height:1px;background:#dcdcdc"></div>
<div style="position:absolute;left:444px;top:54px;width:68px;height:19px;box-sizing:border-box;background:#ececec;border-left:1px solid #fff;border-top:1px solid #fff;border-radius:2px 2px 0 0;border-right:2px solid #a8a8a8;border-bottom:1px solid #a8a8a8"></div>
<div style="position:absolute;left:477px;top:53px;line-height:20px;white-space:nowrap;">GIS</div>
<svg style="position:absolute;left:447px;top:55px" width="18" height="15" viewBox="0 0 18 15" fill="none"><path d="M5.8 9.8 H17 L12.6 14 H1 Z" fill="#1764c4" stroke="#ececec" stroke-width="0.8"/><path d="M5.8 5.8 H17 L12.6 10 H1 Z" fill="#1764c4" stroke="#ececec" stroke-width="0.8"/><path d="M5.8 1.2 H17 L12.6 5.8 H1 Z" fill="#1764c4" stroke="#ececec" stroke-width="0.8"/></svg>
<div style="position:absolute;left:513px;top:54px;width:106px;height:19px;box-sizing:border-box;background:#ececec;border-left:1px solid #fff;border-top:1px solid #fff;border-radius:2px 2px 0 0;border-right:2px solid #a8a8a8;border-bottom:1px solid #a8a8a8"></div>
<div style="position:absolute;left:545px;top:53px;line-height:20px;white-space:nowrap;">Kennzahlen</div>
<svg style="position:absolute;left:517px;top:56px" width="17" height="15" viewBox="0 0 17 15" fill="none"><path d="M1.5 1.5 L6.8 7 M8.6 9 L11.5 13.5 M0.5 13.5 L12.5 2.8 M4.5 13.5 L9.5 7 M7.5 4.8 L9.5 3.5" stroke="#3ca528" stroke-width="1.7" fill="none"/><path d="M11 0.3 L16 0.3 L15.6 5.3 Z" fill="#3ca528"/></svg>
<div style="position:absolute;left:620px;top:54px;width:109px;height:19px;box-sizing:border-box;background:#fff;border-left:1px solid #fff;border-top:1px solid #fff;border-radius:2px 2px 0 0;border-right:2px solid #a8a8a8;border-bottom:1px solid #a8a8a8"></div>
<div style="position:absolute;left:644px;top:53px;line-height:20px;white-space:nowrap;">Maßnahmen</div>
<svg style="position:absolute;left:711px;top:57px" width="13" height="13" viewBox="0 0 13 13" fill="none"><path d="M1.5 1.5 L11.5 11.5 M11.5 1.5 L1.5 11.5" stroke="#222" stroke-width="3.2"/></svg>
<svg style="position:absolute;left:627px;top:56px" width="12" height="14" viewBox="0 0 12 14" fill="none"><path d="M1 1 H8 L11 4 V13 H1 Z" fill="#fff" stroke="#111" stroke-width="1.4"/><path d="M3 5 H9 M3 7.5 H9 M3 10 H9" stroke="#111" stroke-width="1.2"/></svg>
<div style="position:absolute;left:730px;top:54px;width:134px;height:19px;box-sizing:border-box;background:#ececec;border-left:1px solid #fff;border-top:1px solid #fff;border-radius:2px 2px 0 0;border-right:2px solid #a8a8a8;border-bottom:1px solid #a8a8a8"></div>
<div style="position:absolute;left:763px;top:53px;line-height:20px;white-space:nowrap;">Anbau/Arbeitsort</div>
<svg style="position:absolute;left:734px;top:56px" width="17" height="15" viewBox="0 0 17 15" fill="none"><path d="M1.5 1.5 L6.8 7 M8.6 9 L11.5 13.5 M0.5 13.5 L12.5 2.8 M4.5 13.5 L9.5 7 M7.5 4.8 L9.5 3.5" stroke="#3ca528" stroke-width="1.7" fill="none"/><path d="M11 0.3 L16 0.3 L15.6 5.3 Z" fill="#3ca528"/></svg>
<div style="position:absolute;left:865px;top:54px;width:92px;height:19px;box-sizing:border-box;background:#fff;border-left:1px solid #fff;border-top:1px solid #fff;border-radius:2px 2px 0 0;border-right:2px solid #a8a8a8;border-bottom:1px solid #a8a8a8"></div>
<div style="position:absolute;left:870px;top:53px;line-height:20px;white-space:nowrap;">Kostenstellen</div>
<svg style="position:absolute;left:941px;top:57px" width="13" height="13" viewBox="0 0 13 13" fill="none"><path d="M1.5 1.5 L11.5 11.5 M11.5 1.5 L1.5 11.5" stroke="#222" stroke-width="3.2"/></svg>
<div style="position:absolute;left:957px;top:52px;width:121px;height:21px;box-sizing:border-box;background:#dae8f6;border-left:1px solid #fff;border-top:1px solid #fff;border-radius:2px 2px 0 0;border-right:2px solid #a8a8a8;border-bottom:1px solid #a8a8a8"></div>
<div style="position:absolute;left:964px;top:53px;line-height:20px;white-space:nowrap;">Fahrzeuge/Geräte</div>
<svg style="position:absolute;left:1059px;top:56px" width="13" height="13" viewBox="0 0 13 13" fill="none"><path d="M1.5 1.5 L11.5 11.5 M11.5 1.5 L1.5 11.5" stroke="#222" stroke-width="3.2"/></svg>
<div style="position:absolute;left:1081px;top:53px;width:383px;height:21px;border-top:1px solid #d8d8d8;border-bottom:1px solid #fff;box-sizing:border-box"></div>
<svg style="position:absolute;left:447px;top:83px" width="15" height="14" viewBox="0 0 15 14" fill="none"><rect x="1.5" y="0.5" width="12.5" height="12.5" stroke="#444" stroke-width="1.2"/><path d="M7.75 0.5 V13 M1.5 6.75 H14" stroke="#444" stroke-width="1"/><path d="M6.3 4 L7.75 2.5 L9.2 4 M6.3 9.5 L7.75 11 L9.2 9.5 M5 5.3 L3.5 6.75 L5 8.2 M10.5 5.3 L12 6.75 L10.5 8.2" stroke="#444" stroke-width="1"/></svg>
<svg style="position:absolute;left:472px;top:83px" width="15" height="14" viewBox="0 0 15 14" fill="none"><path d="M3.5 5 V0.5 H11.5 V5" stroke="#a6cc66" stroke-width="1"/><path d="M5 2.5 H9.5 M5 4.5 H9.5" stroke="#a6cc66" stroke-width="1"/><rect x="0.5" y="6" width="14" height="7.5" rx="2" fill="#555"/><rect x="2.3" y="9.8" width="10.4" height="2.4" fill="#fff"/><rect x="2.5" y="7.3" width="1.8" height="1" fill="#ddd"/></svg>
<svg style="position:absolute;left:500px;top:83px" width="13" height="15" viewBox="0 0 13 15" fill="none"><path d="M1.5 0.5 H9.5 L12.5 3.5 V13.5 H1.5 Z" fill="#fff" stroke="#555" stroke-width="1.1" stroke-linejoin="miter"/><path d="M9.5 0.5 V3.5 H12.5" stroke="#555" stroke-width="1"/></svg>
<svg style="position:absolute;left:524px;top:83px" width="13" height="15" viewBox="0 0 13 15" fill="none"><path d="M1.5 0.5 H9.5 L12.5 3.5 V13.5 H1.5 Z" fill="#fff" stroke="#555" stroke-width="1.1" stroke-linejoin="miter"/><path d="M9.5 0.5 V3.5 H12.5" stroke="#555" stroke-width="1"/><path d="M3.5 2.5 H6.5 M3.5 4.5 H6.5 M3.5 7.5 H10.5 M3.5 9.5 H10.5 M3.5 11.5 H7" stroke="#9cc55a" stroke-width="1"/></svg>
<svg style="position:absolute;left:548px;top:82px" width="15" height="15" viewBox="0 0 15 15" fill="none"><path d="M1.5 6.5 V14.5 H10.5 V10" stroke="#555" stroke-width="1.1"/><path d="M1.5 6.5 H5" stroke="#888" stroke-width="1"/><rect x="2" y="7" width="8" height="7" fill="#f0f0f0"/><path d="M3.5 6 L7 2 H10.5" stroke="#a6cc66" stroke-width="1" stroke-dasharray="1.5 1"/><path d="M9 5.5 A2.5 2.5 0 1 0 12 8.5" stroke="#a6cc66" stroke-width="1" stroke-dasharray="1.5 1"/><path d="M14 1.5 V6.5" stroke="#555" stroke-width="1.3"/></svg>
<svg style="position:absolute;left:572px;top:83px" width="13" height="14" viewBox="0 0 13 14" fill="none"><path d="M2 2 H11 V12 H2 Z" stroke="#c8c8c8" stroke-width="2.2" stroke-linejoin="round"/><path d="M4 7.5 H9" stroke="#c8c8c8" stroke-width="2"/><path d="M4.5 2 H8.5" stroke="#e0e0e0" stroke-width="1"/><rect x="6" y="9.5" width="1.6" height="1.6" fill="#c8c8c8"/></svg>
<div style="position:absolute;left:593px;top:80px;width:1px;height:20px;background:#888"></div>
<svg style="position:absolute;left:602px;top:84px" width="13" height="12" viewBox="0 0 13 12" fill="none"><path d="M4.5 1 L1.5 4.5 L4.5 8" fill="none" stroke="#c0c0c0" stroke-width="1.5"/><path d="M1.5 4.5 H8 Q12 4.5 12 8 Q12 11 8 11 H7" fill="none" stroke="#c0c0c0" stroke-width="1.5"/></svg>
<svg style="position:absolute;left:625px;top:83px" width="13" height="15" viewBox="0 0 13 15" fill="none"><path d="M1.5 0.5 H9.5 L12.5 3.5 V13.5 H1.5 Z" fill="#fff" stroke="#555" stroke-width="1.1" stroke-linejoin="miter"/><path d="M9.5 0.5 V3.5 H12.5" stroke="#555" stroke-width="1"/><path d="M4 6.5 L9 11.5 M9 6.5 L4 11.5" stroke="#9cc55a" stroke-width="1.8"/></svg>
<svg style="position:absolute;left:650px;top:83px" width="13" height="14" viewBox="0 0 13 14" fill="none"><path d="M6 2.5 Q1.5 3 1.5 7.5 Q1.5 10 3.5 11.5" fill="none" stroke="#444" stroke-width="1.8"/><path d="M5 0 L8 2.5 L5 5 Z" fill="#444"/><path d="M7 11.5 Q11.5 11 11.5 6.5 Q11.5 4 9.5 2.5" fill="none" stroke="#a6cc66" stroke-width="1.8"/><path d="M8 9 L5 11.5 L8 14 Z" fill="#a6cc66"/></svg>
<svg style="position:absolute;left:671px;top:83px" width="17" height="15" viewBox="0 0 17 15" fill="none"><path d="M1.5 0.5 H9.5 L12.5 3.5 V13.5 H1.5 Z" fill="#fff" stroke="#555" stroke-width="1.1" stroke-linejoin="miter"/><path d="M9.5 0.5 V3.5 H12.5" stroke="#555" stroke-width="1"/><path d="M3.5 2.5 H6.5 M3.5 4.5 H8.5 M3.5 7.5 H7" stroke="#9cc55a" stroke-width="1"/><path d="M6.5 9 H12 V6.5 L16.5 10.5 L12 14.5 V12 H6.5 Z" fill="#f39a3a"/></svg>
<svg style="position:absolute;left:698px;top:84px" width="12" height="12" viewBox="0 0 12 12" fill="none"><path d="M1.5 1.5 L10.5 10.5 M10.5 1.5 L1.5 10.5" stroke="#555" stroke-width="3"/></svg>
<div style="position:absolute;left:718px;top:80px;width:1px;height:20px;background:#888"></div>
<svg style="position:absolute;left:730px;top:85px" width="7" height="10" viewBox="0 0 7 10" fill="none"><path d="M0 0.5 H1 M2.5 0.5 H7 M0 3.3 H1 M2.5 3.3 H7 M0 6.1 H1 M2.5 6.1 H7 M0 8.9 H1 M2.5 8.9 H7" stroke="#222" stroke-width="1"/></svg>
<svg style="position:absolute;left:748px;top:82px" width="17" height="16" viewBox="0 0 17 16" fill="none"><rect x="2" y="1" width="14" height="13" rx="1.2" fill="#5a8cd6"/><rect x="5" y="1" width="7" height="4.5" fill="#cfcfcf"/><rect x="9.5" y="1.5" width="1.5" height="3.5" fill="#8a8a8a"/><rect x="4" y="7" width="10" height="7" fill="#f4f8fc"/><path d="M3 11 Q7 7.5 13 8.5" stroke="#777" stroke-width="1"/><rect x="1.5" y="12" width="5" height="3.5" rx="1" fill="#e0fbff" stroke="#333" stroke-width="1.2"/><rect x="8" y="12" width="5" height="3.5" rx="1" fill="#f4f4f4" stroke="#333" stroke-width="1.2"/><path d="M6.5 13 H8" stroke="#333"/></svg>
<div style="position:absolute;left:771px;top:80px;width:1px;height:20px;background:#888"></div>
<div style="position:absolute;left:774px;top:78px;width:91px;height:22px;background:#cce4f7;border:1px solid #99c9ef;box-sizing:border-box"></div>
<div style="position:absolute;left:778px;top:80px;line-height:20px;white-space:nowrap;">inaktive anzeigen</div>
<div style="position:absolute;left:868px;top:80px;width:1px;height:20px;background:#888"></div>
<div style="position:absolute;left:874px;top:80px;line-height:20px;white-space:nowrap;">Kostensatz</div>
<div style="position:absolute;left:932px;top:88px;width:0;height:0;border-left:3.0px solid transparent;border-right:3.0px solid transparent;border-top:3px solid #111"></div>
<svg style="position:absolute;left:946px;top:82px" width="17" height="16" viewBox="0 0 17 16" fill="none"><rect x="0.75" y="0.75" width="11" height="13" fill="#e8e8f0" stroke="#555" stroke-width="1.5"/><path d="M2.5 3 H9 M2.5 5.5 H9 M2.5 8 H9 M2.5 10.5 H9" stroke="#6a6aff" stroke-width="1.2"/><rect x="6.25" y="4.25" width="9.5" height="11" fill="#ffff40" stroke="#444" stroke-width="1.5"/><text x="11" y="13.5" font-size="10" font-family="Liberation Sans" fill="#ff7a30" text-anchor="middle" font-weight="bold">?</text></svg>
<div style="position:absolute;left:965px;top:80px;line-height:20px;white-space:nowrap;letter-spacing:-0.17px">Maschinenart: alle anzeigen</div>
<div style="position:absolute;left:1102px;top:89px;width:0;height:0;border-left:3.0px solid transparent;border-right:3.0px solid transparent;border-top:3px solid #111"></div>
<div style="position:absolute;left:1114px;top:80px;width:1px;height:20px;background:#888"></div>
<div style="position:absolute;left:1120px;top:80px;line-height:20px;white-space:nowrap;letter-spacing:-0.2px">Barcode drucken</div>
<div style="position:absolute;left:1207px;top:80px;width:1px;height:20px;background:#888"></div>
<div style="position:absolute;left:1213px;top:80px;line-height:20px;white-space:nowrap;letter-spacing:-0.2px">Kalkulation drucken</div>
<div style="position:absolute;left:74px;top:21px;width:201px;height:361px;box-sizing:border-box;background:#f0f0f0;border:1px solid #a0a0a0;box-shadow:3px 3px 3px rgba(0,0,0,0.28)"></div>
<div style="position:absolute;left:263px;top:29px;width:0;height:0;border-top:4.0px solid transparent;border-bottom:4.0px solid transparent;border-left:4px solid #000"></div>
<div style="position:absolute;left:98px;top:23px;line-height:20px;white-space:nowrap;">Schwein</div>
<div style="position:absolute;left:98px;top:43px;line-height:20px;white-space:nowrap;">Betriebsverwaltung</div>
<div style="position:absolute;left:263px;top:69px;width:0;height:0;border-top:4.0px solid transparent;border-bottom:4.0px solid transparent;border-left:4px solid #000"></div>
<div style="position:absolute;left:98px;top:63px;line-height:20px;white-space:nowrap;">Betriebsgrunddaten</div>
<div style="position:absolute;left:263px;top:89px;width:0;height:0;border-top:4.0px solid transparent;border-bottom:4.0px solid transparent;border-left:4px solid #000"></div>
<div style="position:absolute;left:98px;top:83px;line-height:20px;white-space:nowrap;">Kostenrechnung</div>
<div style="position:absolute;left:98px;top:103px;line-height:20px;white-space:nowrap;">Kennzeichen</div>
<div style="position:absolute;left:263px;top:135px;width:0;height:0;border-top:4.0px solid transparent;border-bottom:4.0px solid transparent;border-left:4px solid #000"></div>
<div style="position:absolute;left:98px;top:129px;line-height:20px;white-space:nowrap;">Adressverwaltung</div>
<div style="position:absolute;left:263px;top:155px;width:0;height:0;border-top:4.0px solid transparent;border-bottom:4.0px solid transparent;border-left:4px solid #000"></div>
<div style="position:absolute;left:98px;top:149px;line-height:20px;white-space:nowrap;">Anbau und Arbeitsorte</div>
<div style="position:absolute;left:263px;top:175px;width:0;height:0;border-top:4.0px solid transparent;border-bottom:4.0px solid transparent;border-left:4px solid #000"></div>
<div style="position:absolute;left:98px;top:169px;line-height:20px;white-space:nowrap;">Artikel</div>
<div style="position:absolute;left:76px;top:189px;width:197px;height:20px;background:#0078d7"></div>
<div style="position:absolute;left:263px;top:195px;width:0;height:0;border-top:4.0px solid transparent;border-bottom:4.0px solid transparent;border-left:4px solid #fff"></div>
<div style="position:absolute;left:98px;top:189px;line-height:20px;white-space:nowrap;">Maschinengrunddaten</div>
<div style="position:absolute;left:98px;top:215px;line-height:20px;white-space:nowrap;">Arbeitsverfahren</div>
<div style="position:absolute;left:98px;top:235px;line-height:20px;white-space:nowrap;">Liste Arbeitsverfahren (Report)</div>
<div style="position:absolute;left:98px;top:261px;line-height:20px;white-space:nowrap;">Textvorlagen</div>
<div style="position:absolute;left:263px;top:287px;width:0;height:0;border-top:4.0px solid transparent;border-bottom:4.0px solid transparent;border-left:4px solid #000"></div>
<div style="position:absolute;left:98px;top:281px;line-height:20px;white-space:nowrap;">Fakturagrunddaten</div>
<div style="position:absolute;left:263px;top:307px;width:0;height:0;border-top:4.0px solid transparent;border-bottom:4.0px solid transparent;border-left:4px solid #000"></div>
<div style="position:absolute;left:98px;top:301px;line-height:20px;white-space:nowrap;">Düngeplanung</div>
<div style="position:absolute;left:263px;top:327px;width:0;height:0;border-top:4.0px solid transparent;border-bottom:4.0px solid transparent;border-left:4px solid #000"></div>
<div style="position:absolute;left:98px;top:321px;line-height:20px;white-space:nowrap;">DÜV Jahresbilanzen</div>
<div style="position:absolute;left:263px;top:347px;width:0;height:0;border-top:4.0px solid transparent;border-bottom:4.0px solid transparent;border-left:4px solid #000"></div>
<div style="position:absolute;left:98px;top:341px;line-height:20px;white-space:nowrap;">Flächengrunddaten/Verträge</div>
<div style="position:absolute;left:263px;top:367px;width:0;height:0;border-top:4.0px solid transparent;border-bottom:4.0px solid transparent;border-left:4px solid #000"></div>
<div style="position:absolute;left:98px;top:361px;line-height:20px;white-space:nowrap;">Lagergrunddaten</div>
<div style="position:absolute;left:78px;top:125px;width:192px;height:1px;background:#a0a0a0"></div>
<div style="position:absolute;left:78px;top:211px;width:192px;height:1px;background:#a0a0a0"></div>
<div style="position:absolute;left:78px;top:257px;width:192px;height:1px;background:#a0a0a0"></div>
<div style="position:absolute;left:273px;top:187px;width:143px;height:63px;box-sizing:border-box;background:#f0f0f0;border:1px solid #a0a0a0;box-shadow:3px 3px 3px rgba(0,0,0,0.28)"></div>
<div style="position:absolute;left:275px;top:189px;width:140px;height:20px;background:#0078d7"></div>
<div style="position:absolute;left:297px;top:189px;line-height:20px;white-space:nowrap;">Fahrzeuge/Geräte</div>
<div style="position:absolute;left:297px;top:209px;line-height:20px;white-space:nowrap;">Maschinenringsätze</div>
<div style="position:absolute;left:297px;top:229px;line-height:20px;white-space:nowrap;">Kalkulation</div>
<div style="position:absolute;left:405px;top:235px;width:0;height:0;border-top:4.0px solid transparent;border-bottom:4.0px solid transparent;border-left:4px solid #000"></div>
<div style="position:absolute;left:22px;top:1px;width:48px;height:43px;box-sizing:border-box;background:#fff;border:2px solid #76bb68;border-radius:2px;box-shadow:2px 3px 5px rgba(0,0,0,0.22);text-align:center;font-weight:bold;font-size:28px;line-height:42px;color:#006400"><svg style="position:absolute;left:15px;top:9px" width="12" height="21" viewBox="0 0 12 21"><path d="M5.6 0.3 H9.6 V20 H5.6 V6.4 L0.8 9.3 V5.6 Q4.2 3.6 5.6 0.3 Z" fill="#006400"/></svg></div>
<div style="position:absolute;left:22px;top:176px;width:48px;height:43px;box-sizing:border-box;background:#fff;border:2px solid #76bb68;border-radius:2px;box-shadow:2px 3px 5px rgba(0,0,0,0.22);text-align:center;font-weight:bold;font-size:28px;line-height:42px;color:#006400">2</div>
<div style="position:absolute;left:422px;top:181px;width:48px;height:43px;box-sizing:border-box;background:#fff;border:2px solid #76bb68;border-radius:2px;box-shadow:2px 3px 5px rgba(0,0,0,0.22);text-align:center;font-weight:bold;font-size:28px;line-height:42px;color:#006400">3</div>
<div style="position:absolute;left:508px;top:104px;width:48px;height:44px;box-sizing:border-box;background:#fff;border:2px solid #76bb68;border-radius:2px;box-shadow:2px 3px 5px rgba(0,0,0,0.22);text-align:center;font-weight:bold;font-size:28px;line-height:43px;color:#006400">4</div>
<div style="position:absolute;left:1312px;top:137px;width:48px;height:44px;box-sizing:border-box;background:#fff;border:2px solid #76bb68;border-radius:2px;box-shadow:2px 3px 5px rgba(0,0,0,0.22);text-align:center;font-weight:bold;font-size:28px;line-height:43px;color:#006400">5</div>
</body></html>
